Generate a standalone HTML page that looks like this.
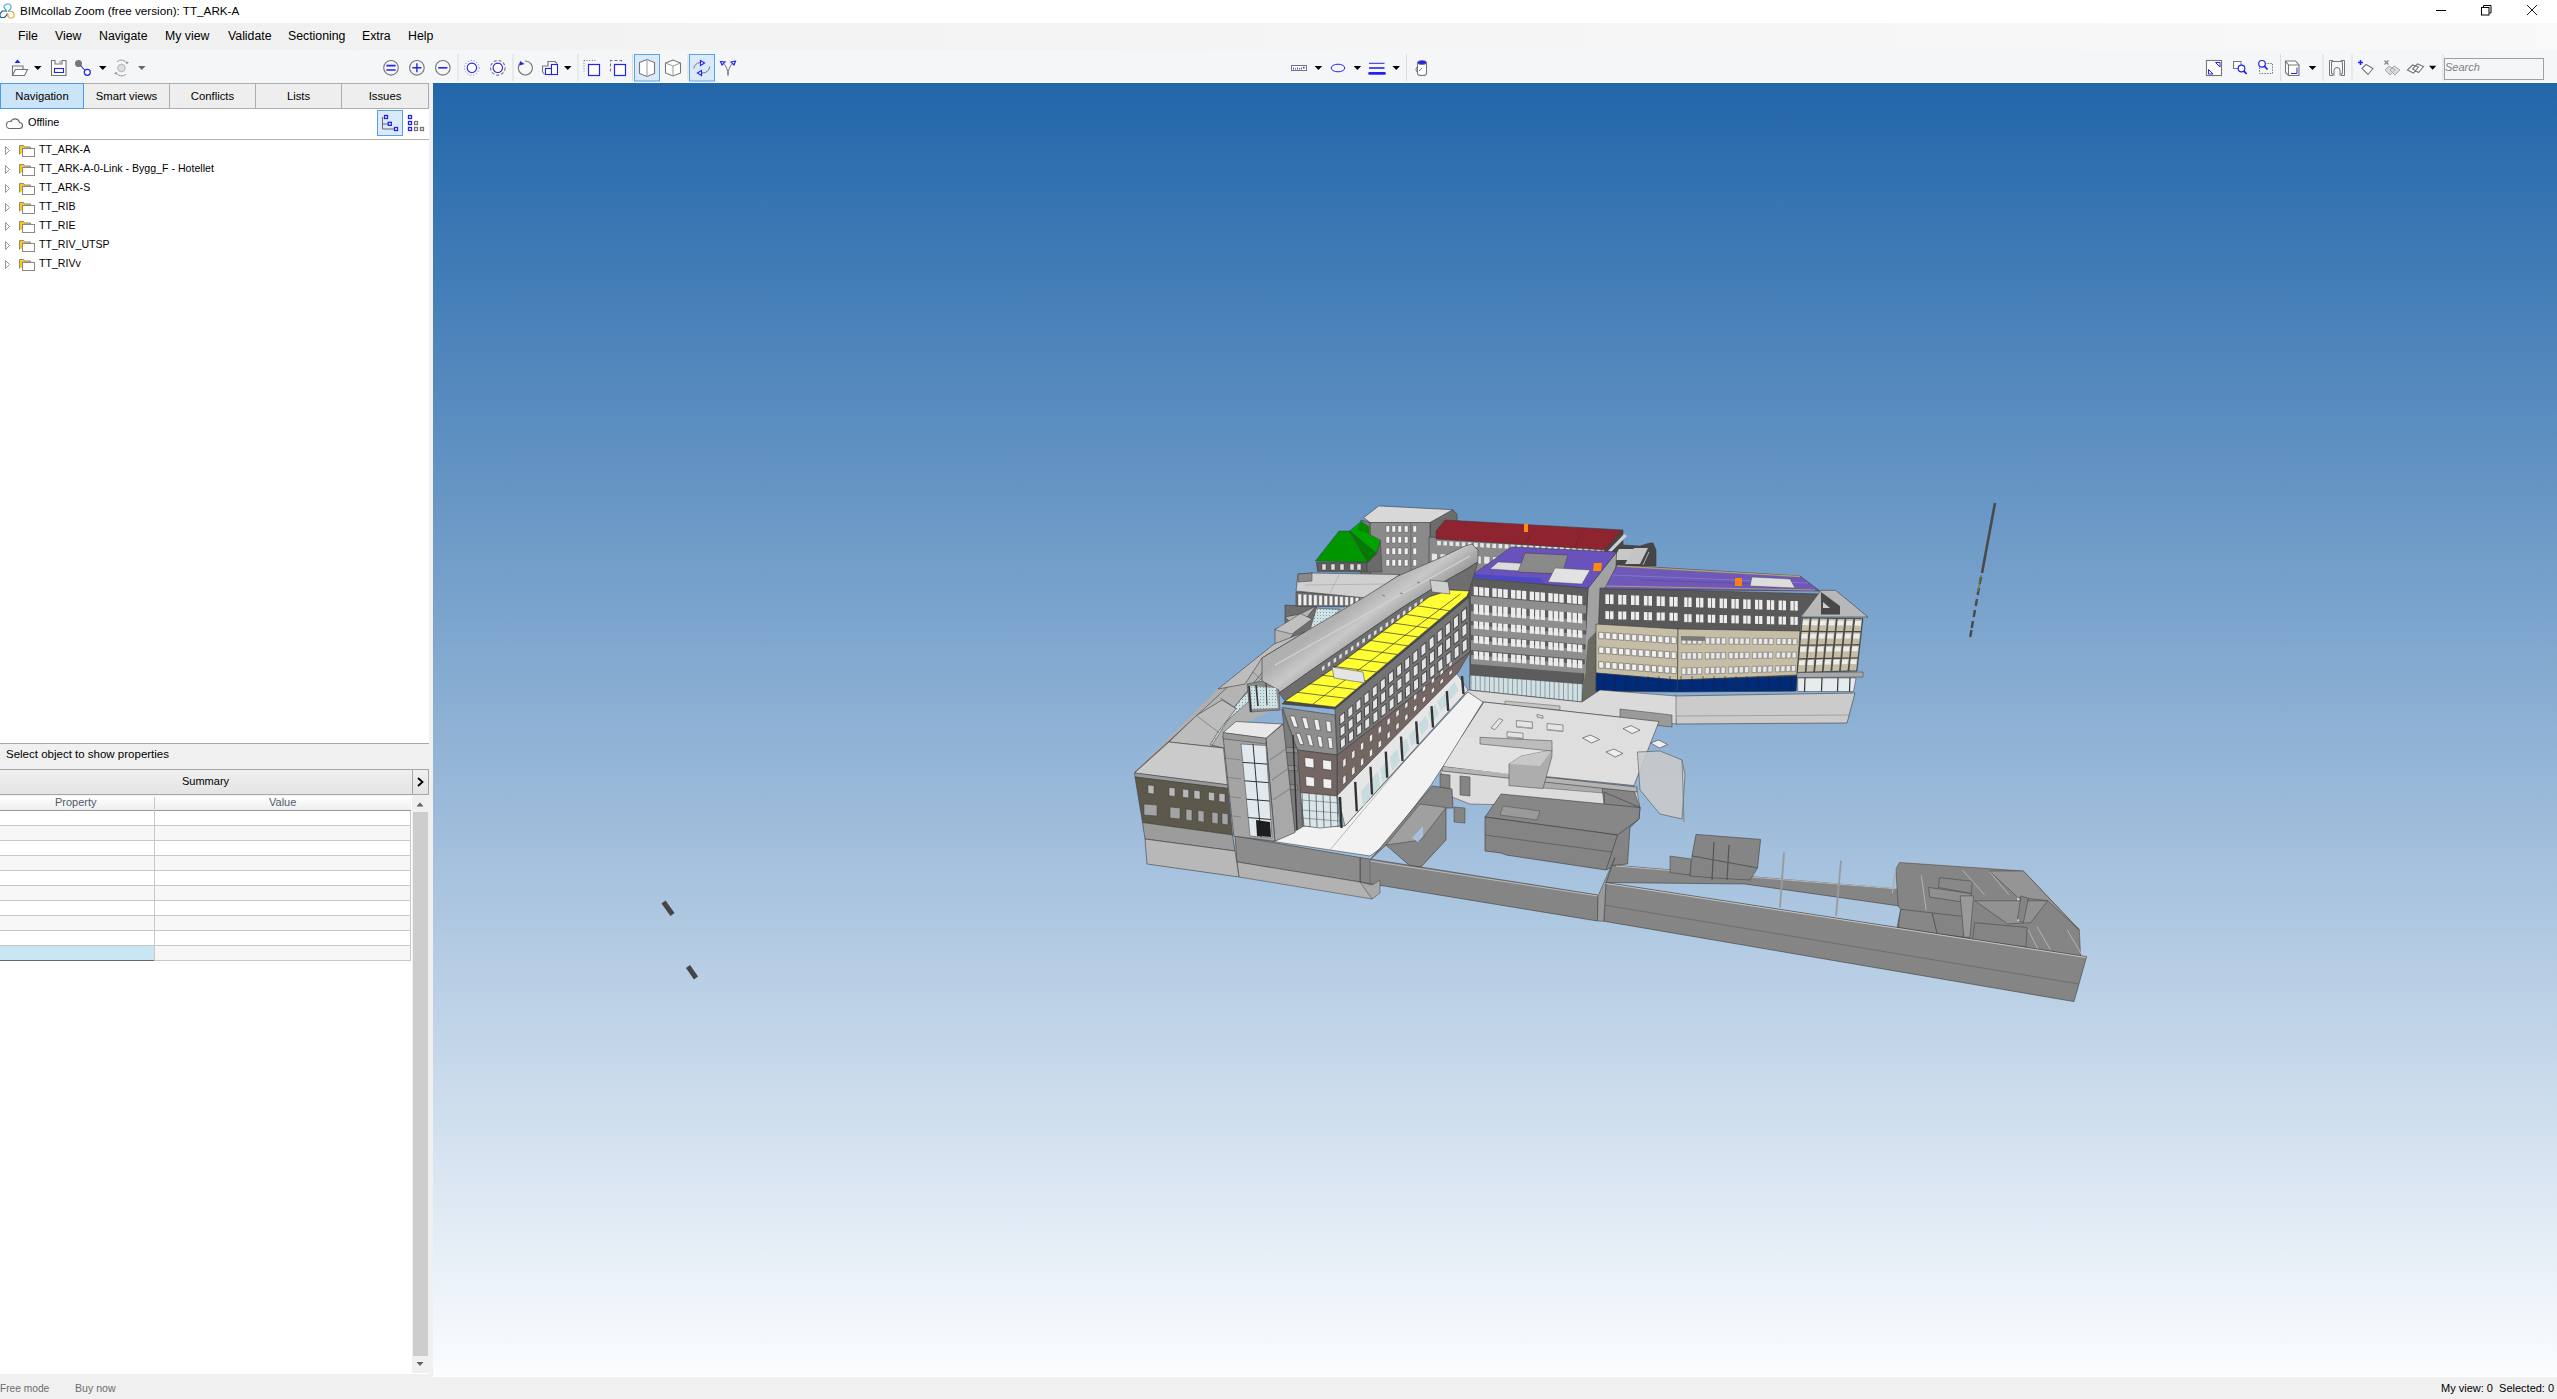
<!DOCTYPE html>
<html><head><meta charset="utf-8">
<style>
*{margin:0;padding:0;box-sizing:border-box}
html,body{width:2557px;height:1399px;overflow:hidden;background:#fff;font-family:"Liberation Sans",sans-serif;color:#000}
.a{position:absolute}
#title{left:0;top:0;width:2557px;height:23px;background:#fff}
#title .t{left:20px;top:4px;font-size:11.7px;white-space:nowrap;color:#000}
#menu{left:0;top:23px;width:2557px;height:27px;background:linear-gradient(90deg,#f0f0f0 0%,#f9f9f9 100%)}
#menu span{position:absolute;top:6px;font-size:12.3px;white-space:nowrap}
#tb{left:0;top:50px;width:2557px;height:33px;background:#f5f6f8}
#left{left:0;top:83px;width:429px;height:1291px;background:#fff}
#split{left:429px;top:83px;width:4px;height:1294px;background:#f0f0f0}
#vp{left:433px;top:83px;width:2124px;height:1294px;background:linear-gradient(180deg,#2266aa 0%,#fbfdff 100%)}
#status{left:0;top:1377px;width:2557px;height:22px;background:#f0f0f0}
#lstrip{left:0;top:1374px;width:433px;height:3px;background:#f0f0f0}
#status span{position:absolute;top:5px;font-size:11px;white-space:nowrap}
.tab{position:absolute;top:0;height:26px;border:1px solid #adadad;border-left:none;background:#eeeeee;font-size:11.3px;text-align:center;line-height:24px;color:#000}
.tree{position:absolute;left:0;width:429px;height:19px;font-size:10.6px}
.tree span{position:absolute;left:39px;top:3px;white-space:nowrap}
.tree svg{position:absolute;left:0;top:0}
.sep{position:absolute;top:54px;width:1px;height:27px;background:#d9d9d9}
.row{position:absolute;left:0;width:411px;height:15px;border-bottom:1px solid #c8c8c8}
</style></head><body>
<div id="title" class="a">
<svg class="a" style="left:0;top:0" width="20" height="23" viewBox="0 0 20 23"><path d="M4.5 5.5l2-1.5h3l1.5 2v2l-1 1.5-2 2M6.5 10.5l-1.5-1.5-1-2v-1.5" fill="none" stroke="#3cb0e8" stroke-width="1.2"/><path d="M7 11.5l-1-.5h-3.5l-2.5 2.5v2.5l1 1.5h3.5l2-2 1-2" fill="none" stroke="#175a8e" stroke-width="1.2"/><path d="M8 11.5h4.5l1.5 2v3l-1.5 1.5h-3l-1.5-1.5v-3" fill="none" stroke="#e8aa3a" stroke-width="1.2"/></svg>
<div class="a t">BIMcollab Zoom (free version): TT_ARK-A</div>
<svg class="a" style="left:2430px;top:0" width="127" height="23" viewBox="2430 0 127 23">
<path d="M2436 10.5H2446" stroke="#000" stroke-width="1"/>
<path d="M2483.5 7V5.5h7.5v7.5h-1.5" fill="none" stroke="#000" stroke-width="1"/>
<rect x="2481.5" y="7.5" width="7.5" height="7.5" fill="none" stroke="#000" stroke-width="1"/>
<path d="M2527 5L2537 15M2537 5L2527 15" stroke="#000" stroke-width="0.9"/>
</svg>
</div>
<div id="menu" class="a"><span style="left:18px">File</span><span style="left:55px">View</span><span style="left:99px">Navigate</span><span style="left:165px">My view</span><span style="left:228px">Validate</span><span style="left:288px">Sectioning</span><span style="left:362px">Extra</span><span style="left:408px">Help</span></div>
<div id="tb" class="a"></div><svg class="a" style="left:0;top:50px" width="2557" height="33" viewBox="0 50 2557 33"><path d="M17.5 59.5l-3 3.5h6z" fill="#2323f0"/><path d="M12.5 75.5V66h10.5v3.5" fill="none" stroke="#767676" stroke-width="1.1"/><path d="M12.5 75.5l3-6h12l-3 6z" fill="#fff" stroke="#767676" stroke-width="1.1"/><path d="M34 66h7.5l-3.75 4z" fill="#000"/><path d="M51.5 60.5h3.5v3.5h7v-3.5h4v15h-14.5z" fill="#fff" stroke="#767676" stroke-width="1.1"/><rect x="54.5" y="68.5" width="9" height="4" fill="none" stroke="#2323f0" stroke-width="1.1"/><circle cx="60" cy="62" r="0.8" fill="#767676"/><circle cx="78.5" cy="63.5" r="3.5" fill="#767676"/><path d="M80.5 65.5l5 5.5" stroke="#2323f0" stroke-width="1.1"/><circle cx="87.3" cy="72.3" r="3" fill="#fff" stroke="#2323f0" stroke-width="1.2"/><path d="M99 66h7.5l-3.75 4z" fill="#000"/><circle cx="121.5" cy="68" r="3.8" fill="#ddd" stroke="#aaa" stroke-width="0.8"/><path d="M117 62a6 6 0 0 1 10 2M126 74a6 6 0 0 1-10-2" fill="none" stroke="#999" stroke-width="1"/><path d="M127 64l2-2-3.5-.5z M116 72l-2 2 3.5.5z" fill="#999"/><path d="M138 66h7.5l-3.75 4z" fill="#666"/><circle cx="391" cy="67.8" r="7.3" fill="none" stroke="#767676" stroke-width="1.1"/><path d="M386.4 65.6h9.2M386.4 70h9.2" stroke="#2323f0" stroke-width="1.6"/><circle cx="416.9" cy="67.8" r="7.3" fill="none" stroke="#767676" stroke-width="1.1"/><path d="M412.4 67.8h9M416.9 63.3v9" stroke="#2323f0" stroke-width="1.4"/><circle cx="442.8" cy="67.8" r="7.3" fill="none" stroke="#767676" stroke-width="1.1"/><path d="M438.2 67.8h9.2" stroke="#2323f0" stroke-width="1.6"/><rect x="457.5" y="54" width="1" height="27" fill="#dcdcdc"/><rect x="512.5" y="54" width="1" height="27" fill="#dcdcdc"/><rect x="577.5" y="54" width="1" height="27" fill="#dcdcdc"/><rect x="632" y="54" width="1" height="27" fill="#dcdcdc"/><rect x="687.5" y="54" width="1" height="27" fill="#dcdcdc"/><rect x="1406" y="54" width="1" height="27" fill="#dcdcdc"/><rect x="2280" y="54" width="1" height="27" fill="#dcdcdc"/><rect x="2322.5" y="54" width="1" height="27" fill="#dcdcdc"/><rect x="2351.5" y="54" width="1" height="27" fill="#dcdcdc"/><rect x="2442.5" y="54" width="1" height="27" fill="#dcdcdc"/><circle cx="471.9" cy="67.8" r="7.3" fill="none" stroke="#767676" stroke-width="1" stroke-dasharray="1 2"/><circle cx="471.9" cy="67.8" r="4.7" fill="#fff" stroke="#2323f0" stroke-width="1.1"/><circle cx="497.8" cy="67.8" r="7.3" fill="none" stroke="#767676" stroke-width="1.1" stroke-dasharray="3 2"/><circle cx="497.8" cy="67.8" r="4.7" fill="#fff" stroke="#2323f0" stroke-width="1.1"/><path d="M521 62.5a7 7 0 1 0 4-1.5" fill="none" stroke="#767676" stroke-width="1.1"/><path d="M520 61l-.5 4.5 5-1.5z" fill="#2323f0"/><path d="M542.5 72V66h5.5v-4.5h7l2 2" fill="none" stroke="#767676" stroke-width="1.1"/><path d="M542.5 72l2 2.5" stroke="#767676" stroke-width="1.1"/><rect x="545.5" y="68.5" width="6" height="6" fill="#fff" stroke="#2323f0" stroke-width="1.1"/><rect x="551.5" y="64.5" width="6" height="10" fill="#fff" stroke="#2323f0" stroke-width="1.1"/><path d="M564 66h7.5l-3.75 4z" fill="#000"/><path d="M584 60.5h12M584 60.5v11" stroke="#767676" stroke-width="1" stroke-dasharray="1 1.6"/><rect x="588.5" y="64.5" width="11" height="11" fill="#fff" stroke="#2323f0" stroke-width="1.2"/><path d="M610.5 71.5v-11h11v3" fill="none" stroke="#767676" stroke-width="1.1" stroke-dasharray="3 2"/><rect x="614.5" y="64.5" width="11" height="11" fill="#fff" stroke="#2323f0" stroke-width="1.2"/><rect x="634.5" y="54.5" width="25" height="26.5" fill="#dbeafb" stroke="#5aa1eb" stroke-width="1"/><rect x="689.5" y="54.5" width="25" height="26.5" fill="#dbeafb" stroke="#5aa1eb" stroke-width="1"/><path d="M639.5 62.5l7.5-3 7.5 3v11l-7.5 3-7.5-3z" fill="#fff" stroke="#767676" stroke-width="1.1"/><path d="M647 59.5v17" stroke="#aaa" stroke-width="1.2"/><path d="M665.5 63l7.5-3 7.5 3v10l-7.5 3-7.5-3z" fill="#fff" stroke="#767676" stroke-width="1.1"/><path d="M665.5 63l7.5 3 7.5-3M673 66v10" fill="none" stroke="#999" stroke-width="1"/><path d="M694 68.5a7 6 0 0 1 6-6M709.5 66.5a7 6 0 0 1-7.5 6.5" fill="none" stroke="#767676" stroke-width="1"/><path d="M700.5 60.5v5l4-2.5z M701.5 70.5v5l-4-2.5z" fill="#fff" stroke="#2323f0" stroke-width="1.2"/><path d="M728 75.5q0-8-5-12.5M728 75.5q0-8 5-12.5" fill="none" stroke="#767676" stroke-width="1"/><path d="M720.5 61.5l4.5.5-3 3z M735.5 61l-4.5 1 3 3z" fill="#fff" stroke="#2323f0" stroke-width="1.2"/><rect x="1291.5" y="65.5" width="15" height="5" fill="#fff" stroke="#767676" stroke-width="1"/><path d="M1293.5 67.5v2M1295.5 68v1.5M1297.5 67.5v2M1299.5 68v1.5M1301.5 67.5v2" stroke="#2323f0" stroke-width="0.8"/><rect x="1303" y="66.8" width="1.6" height="1.6" fill="#2323f0"/><path d="M1314.7 66h7.5l-3.75 4z" fill="#000"/><ellipse cx="1338" cy="68" rx="6.8" ry="3.8" fill="none" stroke="#2323f0" stroke-width="1"/><path d="M1353.7 66h7.5l-3.75 4z" fill="#000"/><path d="M1369 63.3h15.5" stroke="#2323f0" stroke-width="1"/><path d="M1369 68h15.5" stroke="#2323f0" stroke-width="1.6"/><path d="M1369.5 73.4h15" stroke="#2323f0" stroke-width="2.6" stroke-linecap="round"/><path d="M1392.5 66h7.5l-3.75 4z" fill="#000"/><path d="M1417.5 62.5v11a4.5 2 0 0 0 9 0v-11" fill="#fff" stroke="#767676" stroke-width="1.1"/><ellipse cx="1422" cy="62.5" rx="4.5" ry="2" fill="#2323f0" stroke="#767676" stroke-width="0.8"/><path d="M1417.5 66.5a3 3.5 0 0 0 0 6" fill="none" stroke="#767676" stroke-width="1"/><path d="M1419 71l3-3" stroke="#767676" stroke-width="1"/><rect x="2206.5" y="60.5" width="15" height="15" fill="#fff" stroke="#767676" stroke-width="1.1"/><path d="M2215.5 62.5h4.5v4.5z M2208.5 69.5l4.5 4.5h-4.5z" fill="#fff" stroke="#2323f0" stroke-width="1"/><rect x="2233.5" y="61.5" width="7.5" height="7" fill="#fff" stroke="#767676" stroke-width="1"/><circle cx="2241.5" cy="68.5" r="3.3" fill="#fff" stroke="#2323f0" stroke-width="1.2"/><path d="M2243.8 70.8l2.8 3.2" stroke="#2323f0" stroke-width="1.8"/><rect x="2259.5" y="63.5" width="13" height="10" fill="none" stroke="#767676" stroke-width="1" stroke-dasharray="1.5 1.2"/><circle cx="2262" cy="63.8" r="3.3" fill="#fff" stroke="#2323f0" stroke-width="1.2"/><path d="M2264.3 66l3.2 3.5" stroke="#2323f0" stroke-width="1.8"/><path d="M2285.5 61h10l3.5 4v10.5h-10.5l-3-3z" fill="#fff" stroke="#767676" stroke-width="1.1"/><path d="M2288.5 65h10.5M2285.5 61l3 4v10.5" fill="none" stroke="#767676" stroke-width="1.1"/><path d="M2291 73.5h6v-6" fill="none" stroke="#2323f0" stroke-width="1"/><path d="M2308.75 66h7.5l-3.75 4z" fill="#000"/><path d="M2329.5 60.5h3.5v1.2h-1.5v12h1.5v1.8h-3.5z M2344.5 60.5h-3.5v1.2h1.5v12h-1.5v1.8h3.5z" fill="#fff" stroke="#767676" stroke-width="1"/><path d="M2333 61.5h8M2334 75.5v-5a3 3 0 0 1 6 0v5" fill="none" stroke="#767676" stroke-width="1"/><path d="M2358 62.5h5M2360.5 60v5" stroke="#2323f0" stroke-width="1.5"/><path d="M2362 68.5l4-4 7 4-5 6z" fill="#fff" stroke="#767676" stroke-width="1.1"/><path d="M2384.5 60.5l4 4M2388.5 60.5l-4 4" stroke="#888" stroke-width="1.4"/><path d="M2385 70l4-4 6 4-5 5z M2390 70l4-4 6 4-5 5z" fill="#dadada" stroke="#aaa" stroke-width="1"/><path d="M2407.5 70l5-5 6 2-5 6z M2412.5 69l5-5 6 2.5-5 6z" fill="#fff" stroke="#767676" stroke-width="1.1"/><path d="M2429 65.8h7.3l-3.65 4z" fill="#000"/><rect x="2444.5" y="58.5" width="99" height="21" fill="#f5f6f8" stroke="#a0a0a0" stroke-width="1"/></svg><div class="a" style="left:2445px;top:61px;font-size:11px;font-style:italic;color:#808080">Search</div><div id="left" class="a">
<div class="a" style="left:0;top:0;width:429px;height:26px;background:#f5f6f8"></div>
<div class="tab" style="left:0px;width:84px;background:#cce4f7;border:1px solid #4d9ae8">Navigation</div>
<div class="tab" style="left:84px;width:86px">Smart views</div>
<div class="tab" style="left:170px;width:86px">Conflicts</div>
<div class="tab" style="left:256px;width:86px">Lists</div>
<div class="tab" style="left:342px;width:87px">Issues</div>
</div>
<svg class="a" style="left:0;top:108px" width="429" height="32" viewBox="0 108 429 32"><path d="M9 128.5h10.5a3 3 0 0 0 0-6 4.5 4.5 0 0 0-8.5-1 3.2 3.2 0 0 0-2 7z" fill="none" stroke="#666" stroke-width="1.1"/><rect x="377.5" y="110.5" width="25" height="25" fill="#daeafb" stroke="#59a0eb" stroke-width="1"/><path d="M382.5 117v12h11.5M382.5 124h5.5" fill="none" stroke="#666" stroke-width="1"/><rect x="384.5" y="115.5" width="3" height="3" fill="#fff" stroke="#2323f0" stroke-width="1.3"/><rect x="388.3" y="122.3" width="3" height="3" fill="#fff" stroke="#2323f0" stroke-width="1.3"/><rect x="394.5" y="127.5" width="3" height="3" fill="#fff" stroke="#2323f0" stroke-width="1.3"/><rect x="408.5" y="115.5" width="3" height="3" fill="#fff" stroke="#2323f0" stroke-width="1.3"/><rect x="408.5" y="121.5" width="3" height="3" fill="#fff" stroke="#2323f0" stroke-width="1.3"/><rect x="408.5" y="127.5" width="3" height="3" fill="#fff" stroke="#2323f0" stroke-width="1.3"/><rect x="414.5" y="121.5" width="3" height="3" fill="#fff" stroke="#777" stroke-width="1.3"/><rect x="414.5" y="127.5" width="3" height="3" fill="#fff" stroke="#777" stroke-width="1.3"/><rect x="420.5" y="127.5" width="3" height="3" fill="#fff" stroke="#777" stroke-width="1.3"/><rect x="0" y="139" width="429" height="1" fill="#b4b4b4"/></svg>
<div class="a" style="left:28px;top:116px;font-size:10.9px">Offline</div>
<div class="tree" style="top:140px"><svg width="40" height="19"><path d="M5.5 6.5v8l4-4z" fill="#fff" stroke="#999" stroke-width="1"/><path d="M19.5 14.5v-9h4l1 1.5h6v2" fill="#ffc90e" stroke="#888" stroke-width="1"/><rect x="22.5" y="8.5" width="12" height="8" fill="#fff" stroke="#888" stroke-width="1"/></svg><span>TT_ARK-A</span></div>
<div class="tree" style="top:159px"><svg width="40" height="19"><path d="M5.5 6.5v8l4-4z" fill="#fff" stroke="#999" stroke-width="1"/><path d="M19.5 14.5v-9h4l1 1.5h6v2" fill="#ffc90e" stroke="#888" stroke-width="1"/><rect x="22.5" y="8.5" width="12" height="8" fill="#fff" stroke="#888" stroke-width="1"/></svg><span>TT_ARK-A-0-Link - Bygg_F - Hotellet</span></div>
<div class="tree" style="top:178px"><svg width="40" height="19"><path d="M5.5 6.5v8l4-4z" fill="#fff" stroke="#999" stroke-width="1"/><path d="M19.5 14.5v-9h4l1 1.5h6v2" fill="#ffc90e" stroke="#888" stroke-width="1"/><rect x="22.5" y="8.5" width="12" height="8" fill="#fff" stroke="#888" stroke-width="1"/></svg><span>TT_ARK-S</span></div>
<div class="tree" style="top:197px"><svg width="40" height="19"><path d="M5.5 6.5v8l4-4z" fill="#fff" stroke="#999" stroke-width="1"/><path d="M19.5 14.5v-9h4l1 1.5h6v2" fill="#ffc90e" stroke="#888" stroke-width="1"/><rect x="22.5" y="8.5" width="12" height="8" fill="#fff" stroke="#888" stroke-width="1"/></svg><span>TT_RIB</span></div>
<div class="tree" style="top:216px"><svg width="40" height="19"><path d="M5.5 6.5v8l4-4z" fill="#fff" stroke="#999" stroke-width="1"/><path d="M19.5 14.5v-9h4l1 1.5h6v2" fill="#ffc90e" stroke="#888" stroke-width="1"/><rect x="22.5" y="8.5" width="12" height="8" fill="#fff" stroke="#888" stroke-width="1"/></svg><span>TT_RIE</span></div>
<div class="tree" style="top:235px"><svg width="40" height="19"><path d="M5.5 6.5v8l4-4z" fill="#fff" stroke="#999" stroke-width="1"/><path d="M19.5 14.5v-9h4l1 1.5h6v2" fill="#ffc90e" stroke="#888" stroke-width="1"/><rect x="22.5" y="8.5" width="12" height="8" fill="#fff" stroke="#888" stroke-width="1"/></svg><span>TT_RIV_UTSP</span></div>
<div class="tree" style="top:254px"><svg width="40" height="19"><path d="M5.5 6.5v8l4-4z" fill="#fff" stroke="#999" stroke-width="1"/><path d="M19.5 14.5v-9h4l1 1.5h6v2" fill="#ffc90e" stroke="#888" stroke-width="1"/><rect x="22.5" y="8.5" width="12" height="8" fill="#fff" stroke="#888" stroke-width="1"/></svg><span>TT_RIVv</span></div>
<div class="a" style="left:0;top:743px;width:429px;height:1px;background:#a8a8a8"></div>
<div class="a" style="left:0;top:744px;width:429px;height:52px;background:#f0f0f0"></div>
<div class="a" style="left:6px;top:748px;font-size:11.5px">Select object to show properties</div>
<div class="a" style="left:0;top:769px;width:429px;height:26px;border:1px solid #a8a8a8;border-left:none;background:linear-gradient(#f0f0f0,#e4e4e4)"></div>
<div class="a" style="left:412px;top:769px;width:1px;height:26px;background:#a8a8a8"></div>
<div class="a" style="left:182px;top:775px;font-size:11px">Summary</div>
<svg class="a" style="left:416px;top:776px" width="10" height="12"><path d="M2 2l4.5 4L2 10" fill="none" stroke="#000" stroke-width="1.8"/></svg>
<div class="a" style="left:0;top:796px;width:411px;height:15px;background:linear-gradient(#ffffff,#eeeeee);border-bottom:1px solid #999"></div>
<div class="a" style="left:154px;top:797px;width:1px;height:14px;background:#c8c8c8"></div>
<div class="a" style="left:55px;top:796px;font-size:11px;color:#4f5a6e">Property</div>
<div class="a" style="left:269px;top:796px;font-size:11px;color:#4f5a6e">Value</div>
<div class="a" style="left:0;top:811px;width:411px;height:15px;background:#ffffff;border-bottom:1px solid #c8c8c8"></div>
<div class="a" style="left:0;top:826px;width:411px;height:15px;background:#f7f7f7;border-bottom:1px solid #c8c8c8"></div>
<div class="a" style="left:0;top:841px;width:411px;height:15px;background:#ffffff;border-bottom:1px solid #c8c8c8"></div>
<div class="a" style="left:0;top:856px;width:411px;height:15px;background:#f7f7f7;border-bottom:1px solid #c8c8c8"></div>
<div class="a" style="left:0;top:871px;width:411px;height:15px;background:#ffffff;border-bottom:1px solid #c8c8c8"></div>
<div class="a" style="left:0;top:886px;width:411px;height:15px;background:#f7f7f7;border-bottom:1px solid #c8c8c8"></div>
<div class="a" style="left:0;top:901px;width:411px;height:15px;background:#ffffff;border-bottom:1px solid #c8c8c8"></div>
<div class="a" style="left:0;top:916px;width:411px;height:15px;background:#f7f7f7;border-bottom:1px solid #c8c8c8"></div>
<div class="a" style="left:0;top:931px;width:411px;height:15px;background:#ffffff;border-bottom:1px solid #c8c8c8"></div>
<div class="a" style="left:0;top:946px;width:411px;height:15px;background:#f7f7f7;border-bottom:1px solid #c8c8c8"></div>
<div class="a" style="left:0;top:946px;width:155px;height:15px;background:#c9e6f5;border-bottom:1px solid #666;border-right:1px solid #888"></div>
<div class="a" style="left:154px;top:811px;width:1px;height:150px;background:#c8c8c8"></div>
<div class="a" style="left:410px;top:811px;width:1px;height:150px;background:#c8c8c8"></div>
<div class="a" style="left:412px;top:796px;width:17px;height:577px;background:#f0f0f0"></div>
<div class="a" style="left:413px;top:812px;width:15px;height:544px;background:#cdcdcd"></div>
<svg class="a" style="left:412px;top:796px" width="17" height="578"><path d="M4.5 10.5h7l-3.5-4z" fill="#606060"/><path d="M4.5 566h7l-3.5 4z" fill="#606060"/></svg><div id="split" class="a"></div><div id="lstrip" class="a"></div><div id="vp" class="a"></div><svg class="a" style="left:0;top:0" width="2557" height="1399" viewBox="0 0 2557 1399">
<defs><linearGradient id="vault" gradientUnits="userSpaceOnUse" x1="1368" y1="594" x2="1392" y2="626"><stop offset="0" stop-color="#b0b0b0"/><stop offset="0.45" stop-color="#c8c8c8"/><stop offset="1" stop-color="#9a9a9a"/></linearGradient><pattern id="glass" width="3" height="3" patternUnits="userSpaceOnUse"><rect width="3" height="3" fill="#cfe2e4"/><rect width="1" height="1" fill="#8aa0a4"/></pattern></defs>
<line x1="663.5" y1="902.0" x2="672.5" y2="914.5" stroke="#454545" stroke-width="5"/>
<line x1="688.0" y1="966.5" x2="696.0" y2="978.0" stroke="#454545" stroke-width="5"/>
<line x1="1995.0" y1="503.0" x2="1982.0" y2="573.0" stroke="#4a4a4a" stroke-width="2.6"/>
<line x1="1981.0" y1="577.0" x2="1979.7" y2="584.0" stroke="#4a4a4a" stroke-width="2.4"/>
<line x1="1979.0" y1="588.0" x2="1977.7" y2="595.0" stroke="#4a4a4a" stroke-width="2.4"/>
<line x1="1977.0" y1="599.0" x2="1975.7" y2="606.0" stroke="#4a4a4a" stroke-width="2.4"/>
<line x1="1975.0" y1="610.0" x2="1973.7" y2="617.0" stroke="#4a4a4a" stroke-width="2.4"/>
<line x1="1973.0" y1="621.0" x2="1971.7" y2="628.0" stroke="#4a4a4a" stroke-width="2.4"/>
<line x1="1971.5" y1="630.0" x2="1970.2" y2="637.0" stroke="#4a4a4a" stroke-width="2.4"/>
<line x1="1981.0" y1="575.0" x2="1978.0" y2="592.0" stroke="#6a7a30" stroke-width="1.2"/>
<polygon points="1430.0,522.5 1452.7,509.7 1457.0,514.0 1457.0,560.0 1430.0,575.0" fill="#6c6c6c" stroke="#3c3c3c" stroke-width="0.6" stroke-linejoin="round"/>
<polygon points="1370.0,522.5 1430.0,522.5 1430.0,576.0 1370.0,576.0" fill="#8a8a8a" stroke="#3c3c3c" stroke-width="0.6" stroke-linejoin="round"/>
<polygon points="1386.0,525.7 1389.6,525.7 1389.6,532.2 1386.0,532.2" fill="#f2f2f2" stroke="#444" stroke-width="0.4" stroke-linejoin="round"/>
<polygon points="1392.0,525.7 1395.6,525.7 1395.6,532.2 1392.0,532.2" fill="#f2f2f2" stroke="#444" stroke-width="0.4" stroke-linejoin="round"/>
<polygon points="1398.0,525.7 1401.6,525.7 1401.6,532.2 1398.0,532.2" fill="#f2f2f2" stroke="#444" stroke-width="0.4" stroke-linejoin="round"/>
<polygon points="1404.4,525.7 1408.0,525.7 1408.0,532.2 1404.4,532.2" fill="#f2f2f2" stroke="#444" stroke-width="0.4" stroke-linejoin="round"/>
<polygon points="1413.0,525.7 1416.6,525.7 1416.6,532.2 1413.0,532.2" fill="#f2f2f2" stroke="#444" stroke-width="0.4" stroke-linejoin="round"/>
<polygon points="1386.0,536.5 1389.6,536.5 1389.6,543.0 1386.0,543.0" fill="#f2f2f2" stroke="#444" stroke-width="0.4" stroke-linejoin="round"/>
<polygon points="1392.0,536.5 1395.6,536.5 1395.6,543.0 1392.0,543.0" fill="#f2f2f2" stroke="#444" stroke-width="0.4" stroke-linejoin="round"/>
<polygon points="1398.0,536.5 1401.6,536.5 1401.6,543.0 1398.0,543.0" fill="#f2f2f2" stroke="#444" stroke-width="0.4" stroke-linejoin="round"/>
<polygon points="1404.4,536.5 1408.0,536.5 1408.0,543.0 1404.4,543.0" fill="#f2f2f2" stroke="#444" stroke-width="0.4" stroke-linejoin="round"/>
<polygon points="1413.0,536.5 1416.6,536.5 1416.6,543.0 1413.0,543.0" fill="#f2f2f2" stroke="#444" stroke-width="0.4" stroke-linejoin="round"/>
<polygon points="1386.0,548.0 1389.6,548.0 1389.6,554.5 1386.0,554.5" fill="#f2f2f2" stroke="#444" stroke-width="0.4" stroke-linejoin="round"/>
<polygon points="1392.0,548.0 1395.6,548.0 1395.6,554.5 1392.0,554.5" fill="#f2f2f2" stroke="#444" stroke-width="0.4" stroke-linejoin="round"/>
<polygon points="1398.0,548.0 1401.6,548.0 1401.6,554.5 1398.0,554.5" fill="#f2f2f2" stroke="#444" stroke-width="0.4" stroke-linejoin="round"/>
<polygon points="1404.4,548.0 1408.0,548.0 1408.0,554.5 1404.4,554.5" fill="#f2f2f2" stroke="#444" stroke-width="0.4" stroke-linejoin="round"/>
<polygon points="1413.0,548.0 1416.6,548.0 1416.6,554.5 1413.0,554.5" fill="#f2f2f2" stroke="#444" stroke-width="0.4" stroke-linejoin="round"/>
<polygon points="1386.0,559.5 1389.6,559.5 1389.6,566.0 1386.0,566.0" fill="#f2f2f2" stroke="#444" stroke-width="0.4" stroke-linejoin="round"/>
<polygon points="1392.0,559.5 1395.6,559.5 1395.6,566.0 1392.0,566.0" fill="#f2f2f2" stroke="#444" stroke-width="0.4" stroke-linejoin="round"/>
<polygon points="1398.0,559.5 1401.6,559.5 1401.6,566.0 1398.0,566.0" fill="#f2f2f2" stroke="#444" stroke-width="0.4" stroke-linejoin="round"/>
<polygon points="1404.4,559.5 1408.0,559.5 1408.0,566.0 1404.4,566.0" fill="#f2f2f2" stroke="#444" stroke-width="0.4" stroke-linejoin="round"/>
<polygon points="1413.0,559.5 1416.6,559.5 1416.6,566.0 1413.0,566.0" fill="#f2f2f2" stroke="#444" stroke-width="0.4" stroke-linejoin="round"/>
<line x1="1410.8" y1="522.5" x2="1410.8" y2="576.0" stroke="#555" stroke-width="0.6"/>
<polygon points="1363.7,517.7 1378.7,505.9 1452.7,509.7 1430.0,522.5 1370.0,522.5" fill="#d8d8d8" stroke="#3c3c3c" stroke-width="0.6" stroke-linejoin="round"/>
<polygon points="1361.0,520.0 1370.0,522.5 1370.0,576.0 1361.0,576.0" fill="#7a7a7a" stroke="#3c3c3c" stroke-width="0.6" stroke-linejoin="round"/>
<polygon points="1429.0,537.0 1622.0,547.0 1625.0,575.0 1429.0,575.0" fill="#8a8a8a" stroke="#3c3c3c" stroke-width="0.6" stroke-linejoin="round"/>
<polygon points="1437.2,541.0 1440.9,541.1 1440.9,545.3 1437.2,545.2" fill="#e6e6e6"/><polygon points="1443.4,541.3 1447.0,541.4 1447.0,545.6 1443.4,545.5" fill="#e6e6e6"/><polygon points="1449.5,541.6 1453.2,541.7 1453.2,545.9 1449.5,545.8" fill="#e6e6e6"/><polygon points="1455.6,541.9 1459.3,542.0 1459.3,546.2 1455.6,546.1" fill="#e6e6e6"/><polygon points="1461.8,542.2 1465.4,542.3 1465.4,546.5 1461.8,546.4" fill="#e6e6e6"/><polygon points="1467.9,542.5 1471.6,542.6 1471.6,546.8 1467.9,546.7" fill="#e6e6e6"/><polygon points="1474.0,542.8 1477.7,542.9 1477.7,547.1 1474.0,547.0" fill="#e6e6e6"/><polygon points="1480.2,543.1 1483.8,543.2 1483.8,547.4 1480.2,547.3" fill="#e6e6e6"/><polygon points="1486.3,543.4 1490.0,543.5 1490.0,547.7 1486.3,547.6" fill="#e6e6e6"/><polygon points="1492.4,543.7 1496.1,543.8 1496.1,548.0 1492.4,547.9" fill="#e6e6e6"/><polygon points="1498.6,544.0 1502.2,544.1 1502.2,548.3 1498.6,548.2" fill="#e6e6e6"/><polygon points="1504.7,544.3 1508.4,544.4 1508.4,548.6 1504.7,548.5" fill="#e6e6e6"/><polygon points="1510.8,544.6 1514.5,544.7 1514.5,548.9 1510.8,548.8" fill="#e6e6e6"/><polygon points="1517.0,544.9 1520.6,545.0 1520.6,549.2 1517.0,549.1" fill="#e6e6e6"/><polygon points="1523.1,545.2 1526.8,545.3 1526.8,549.5 1523.1,549.4" fill="#e6e6e6"/><polygon points="1529.2,545.5 1532.9,545.6 1532.9,549.8 1529.2,549.7" fill="#e6e6e6"/><polygon points="1535.4,545.8 1539.0,545.9 1539.0,550.1 1535.4,550.0" fill="#e6e6e6"/><polygon points="1541.5,546.1 1545.2,546.2 1545.2,550.4 1541.5,550.3" fill="#e6e6e6"/><polygon points="1547.6,546.4 1551.3,546.5 1551.3,550.7 1547.6,550.6" fill="#e6e6e6"/><polygon points="1553.8,546.7 1557.4,546.8 1557.4,551.0 1553.8,550.9" fill="#e6e6e6"/><polygon points="1559.9,547.0 1563.6,547.1 1563.6,551.3 1559.9,551.2" fill="#e6e6e6"/><polygon points="1566.0,547.3 1569.7,547.4 1569.7,551.6 1566.0,551.5" fill="#e6e6e6"/><polygon points="1572.2,547.6 1575.8,547.7 1575.8,551.9 1572.2,551.8" fill="#e6e6e6"/><polygon points="1578.3,547.9 1582.0,548.0 1582.0,552.2 1578.3,552.1" fill="#e6e6e6"/><polygon points="1584.4,548.2 1588.1,548.3 1588.1,552.5 1584.4,552.4" fill="#e6e6e6"/><polygon points="1590.6,548.5 1594.2,548.6 1594.2,552.8 1590.6,552.7" fill="#e6e6e6"/><polygon points="1596.7,548.8 1600.4,548.9 1600.4,553.1 1596.7,553.0" fill="#e6e6e6"/><polygon points="1602.8,549.1 1606.5,549.2 1606.5,553.4 1602.8,553.3" fill="#e6e6e6"/><polygon points="1609.0,549.4 1612.6,549.5 1612.6,553.7 1609.0,553.6" fill="#e6e6e6"/><polygon points="1615.1,549.7 1618.8,549.8 1618.8,554.0 1615.1,553.9" fill="#e6e6e6"/>
<polygon points="1431.8,553.6 1437.0,553.9 1437.0,560.9 1431.8,560.6" fill="#e6e6e6"/><polygon points="1440.5,554.1 1445.8,554.4 1445.8,561.4 1440.5,561.1" fill="#e6e6e6"/><polygon points="1449.2,554.6 1454.5,554.9 1454.5,561.9 1449.2,561.6" fill="#e6e6e6"/><polygon points="1458.0,555.1 1463.2,555.4 1463.2,562.4 1458.0,562.1" fill="#e6e6e6"/><polygon points="1466.8,555.6 1472.0,555.9 1472.0,562.9 1466.8,562.6" fill="#e6e6e6"/><polygon points="1475.5,556.1 1480.8,556.4 1480.8,563.4 1475.5,563.1" fill="#e6e6e6"/><polygon points="1484.2,556.6 1489.5,556.9 1489.5,563.9 1484.2,563.6" fill="#e6e6e6"/><polygon points="1493.0,557.1 1498.2,557.4 1498.2,564.4 1493.0,564.1" fill="#e6e6e6"/>
<polygon points="1436.0,531.0 1445.0,520.0 1623.0,530.0 1606.0,550.0 1530.0,545.0 1436.0,539.0" fill="#8e2430" stroke="#3c3c3c" stroke-width="0.6" stroke-linejoin="round"/>
<line x1="1530.0" y1="534.0" x2="1525.0" y2="545.0" stroke="#6a1a1e" stroke-width="0.5"/>
<line x1="1580.0" y1="536.0" x2="1575.0" y2="547.0" stroke="#6a1a1e" stroke-width="0.5"/>
<polygon points="1524.0,524.0 1528.0,524.0 1528.0,532.0 1524.0,532.0" fill="#ff8a10"/>
<polygon points="1623.0,530.0 1623.0,545.0 1640.0,546.0 1650.0,543.0 1653.0,543.0 1656.0,550.0 1656.0,566.0 1617.0,566.0 1604.0,551.0" fill="#454545" stroke="#3c3c3c" stroke-width="0.6" stroke-linejoin="round"/>
<polygon points="1619.0,549.0 1635.0,549.0 1629.0,560.0 1613.0,560.0" fill="#c8c8c8"/>
<polygon points="1634.0,548.0 1648.0,548.0 1640.0,564.0 1625.0,564.0" fill="#c4c4c4"/>
<polygon points="1608.0,551.0 1624.0,534.0 1627.0,536.0 1611.0,552.0" fill="#cfcfcf"/>
<line x1="1649.0" y1="552.0" x2="1643.0" y2="565.0" stroke="#cfcfcf" stroke-width="0.8"/>
<polygon points="1316.5,562.2 1367.0,562.0 1367.0,572.0 1317.5,571.3" fill="#5e5e5e" stroke="#3c3c3c" stroke-width="0.6" stroke-linejoin="round"/>
<polygon points="1322.0,564.0 1326.0,564.0 1326.0,570.0 1322.0,570.0" fill="#dcdcdc" stroke="#333" stroke-width="0.4" stroke-linejoin="round"/>
<polygon points="1331.0,564.0 1335.0,564.0 1335.0,570.0 1331.0,570.0" fill="#dcdcdc" stroke="#333" stroke-width="0.4" stroke-linejoin="round"/>
<polygon points="1340.0,564.0 1344.0,564.0 1344.0,570.0 1340.0,570.0" fill="#dcdcdc" stroke="#333" stroke-width="0.4" stroke-linejoin="round"/>
<polygon points="1350.0,564.0 1354.0,564.0 1354.0,570.0 1350.0,570.0" fill="#dcdcdc" stroke="#333" stroke-width="0.4" stroke-linejoin="round"/>
<polygon points="1357.0,564.0 1361.0,564.0 1361.0,570.0 1357.0,570.0" fill="#dcdcdc" stroke="#333" stroke-width="0.4" stroke-linejoin="round"/>
<polygon points="1367.0,562.0 1376.5,553.6 1380.3,540.2 1382.0,572.0 1367.0,572.0" fill="#6a6a6a" stroke="#3c3c3c" stroke-width="0.5" stroke-linejoin="round"/>
<polygon points="1349.7,531.0 1361.0,521.4 1369.0,527.0 1369.0,534.0 1380.3,540.2 1376.5,553.6" fill="#00a400" stroke="#3c3c3c" stroke-width="0.5" stroke-linejoin="round"/>
<polygon points="1315.4,561.0 1339.0,531.0 1349.7,531.0 1368.0,562.2" fill="#009600" stroke="#3c3c3c" stroke-width="0.5" stroke-linejoin="round"/>
<polygon points="1349.7,531.0 1376.5,553.6 1368.0,562.2" fill="#007d00" stroke="#3c3c3c" stroke-width="0.5" stroke-linejoin="round"/>
<polygon points="1361.0,521.4 1369.0,527.0 1369.0,534.0 1357.0,530.0" fill="#008a00"/>
<polygon points="1285.0,605.0 1316.5,607.0 1316.0,640.0 1285.0,640.0" fill="#6e6e6e" stroke="#3c3c3c" stroke-width="0.6" stroke-linejoin="round"/>
<polygon points="1296.0,592.0 1364.7,596.5 1364.7,607.0 1296.0,606.0" fill="#707070" stroke="#3c3c3c" stroke-width="0.6" stroke-linejoin="round"/>
<polygon points="1298.0,594.0 1301.6,594.0 1301.6,605.5 1298.0,605.5" fill="#f0f0f0" stroke="#444" stroke-width="0.4" stroke-linejoin="round"/>
<polygon points="1303.2,594.3 1306.8,594.3 1306.8,605.5 1303.2,605.5" fill="#f0f0f0" stroke="#444" stroke-width="0.4" stroke-linejoin="round"/>
<polygon points="1308.4,594.6 1312.0,594.6 1312.0,605.5 1308.4,605.5" fill="#f0f0f0" stroke="#444" stroke-width="0.4" stroke-linejoin="round"/>
<polygon points="1313.6,594.9 1317.2,594.9 1317.2,605.5 1313.6,605.5" fill="#f0f0f0" stroke="#444" stroke-width="0.4" stroke-linejoin="round"/>
<polygon points="1318.8,595.2 1322.4,595.2 1322.4,605.5 1318.8,605.5" fill="#f0f0f0" stroke="#444" stroke-width="0.4" stroke-linejoin="round"/>
<polygon points="1324.0,595.5 1327.6,595.5 1327.6,605.5 1324.0,605.5" fill="#f0f0f0" stroke="#444" stroke-width="0.4" stroke-linejoin="round"/>
<polygon points="1329.2,595.8 1332.8,595.8 1332.8,605.5 1329.2,605.5" fill="#f0f0f0" stroke="#444" stroke-width="0.4" stroke-linejoin="round"/>
<polygon points="1334.4,596.1 1338.0,596.1 1338.0,605.5 1334.4,605.5" fill="#f0f0f0" stroke="#444" stroke-width="0.4" stroke-linejoin="round"/>
<polygon points="1339.6,596.4 1343.2,596.4 1343.2,605.5 1339.6,605.5" fill="#f0f0f0" stroke="#444" stroke-width="0.4" stroke-linejoin="round"/>
<polygon points="1344.8,596.7 1348.4,596.7 1348.4,605.5 1344.8,605.5" fill="#f0f0f0" stroke="#444" stroke-width="0.4" stroke-linejoin="round"/>
<polygon points="1350.0,597.0 1353.6,597.0 1353.6,605.5 1350.0,605.5" fill="#f0f0f0" stroke="#444" stroke-width="0.4" stroke-linejoin="round"/>
<polygon points="1355.2,597.3 1358.8,597.3 1358.8,605.5 1355.2,605.5" fill="#f0f0f0" stroke="#444" stroke-width="0.4" stroke-linejoin="round"/>
<polygon points="1360.4,597.6 1364.0,597.6 1364.0,605.5 1360.4,605.5" fill="#f0f0f0" stroke="#444" stroke-width="0.4" stroke-linejoin="round"/>
<polygon points="1298.0,574.0 1312.0,573.0 1400.0,574.5 1380.0,588.0 1366.0,598.0 1296.0,591.0" fill="#d0d0d0" stroke="#3c3c3c" stroke-width="0.6" stroke-linejoin="round"/>
<line x1="1305.0" y1="585.0" x2="1385.0" y2="584.0" stroke="#999" stroke-width="0.5"/>
<line x1="1340.0" y1="573.0" x2="1330.0" y2="593.0" stroke="#999" stroke-width="0.5"/>
<polygon points="1298.0,574.0 1312.0,573.0 1312.0,581.0 1298.0,582.0" fill="#8a8a8a" stroke="#3c3c3c" stroke-width="0.5" stroke-linejoin="round"/>
<polygon points="1135.0,772.0 1218.0,689.0 1274.0,644.0 1305.0,632.0 1340.0,609.0 1360.0,602.0 1262.0,681.0 1280.0,700.0 1282.0,707.0 1223.0,732.0 1227.0,784.0" fill="#b0b0b0"/>
<polygon points="1316.5,608.3 1340.0,609.4 1266.0,686.0 1228.0,720.0 1212.0,745.0 1200.0,750.0 1240.0,700.0 1310.0,629.8" fill="url(#glass)" stroke="#3c3c3c" stroke-width="0.5" stroke-linejoin="round"/>
<polygon points="1135.0,772.0 1192.0,720.0 1248.0,668.0 1275.0,644.0 1275.0,629.0 1292.0,624.0 1285.0,617.0 1300.0,614.0 1316.0,606.0 1240.0,700.0 1200.0,750.0 1227.0,784.0" fill="#b4b4b4" stroke="#3c3c3c" stroke-width="0.6" stroke-linejoin="round"/>
<polygon points="1274.7,629.8 1300.4,613.7 1312.0,619.0 1292.0,634.0" fill="#c0c0c0" stroke="#3c3c3c" stroke-width="0.5" stroke-linejoin="round"/>
<line x1="1220.5" y1="698.0" x2="1237.0" y2="709.0" stroke="#555" stroke-width="0.6"/>
<line x1="1192.0" y1="720.0" x2="1212.0" y2="735.0" stroke="#555" stroke-width="0.6"/>
<line x1="1248.0" y1="668.0" x2="1262.0" y2="680.0" stroke="#666" stroke-width="0.5"/>
<polygon points="1218.0,689.0 1274.0,644.0 1305.0,632.0 1262.0,658.0 1245.0,684.0" fill="#bdbdbd" stroke="#3c3c3c" stroke-width="0.6" stroke-linejoin="round"/>
<polygon points="1262.0,658.0 1305.0,632.0 1364.7,597.0 1398.0,576.0 1440.0,558.0 1465.0,546.0 1472.0,544.0 1478.0,550.0 1478.0,562.0 1465.0,570.0 1440.0,584.0 1400.0,609.0 1310.0,671.0 1279.0,693.0 1262.0,681.0" fill="url(#vault)" stroke="#3c3c3c" stroke-width="0.6" stroke-linejoin="round"/>
<line x1="1275.0" y1="665.0" x2="1470.0" y2="556.0" stroke="#d2d2d2" stroke-width="1.3"/>
<line x1="1290.0" y1="688.0" x2="1476.0" y2="566.0" stroke="#9a9a9a" stroke-width="0.6"/>
<polygon points="1247.0,684.0 1262.0,681.0 1279.0,690.0 1280.0,710.0 1250.0,712.0" fill="#8a8a8a" stroke="#3c3c3c" stroke-width="0.5" stroke-linejoin="round"/>
<polygon points="1250.0,686.0 1276.0,688.0 1278.0,708.0 1252.0,709.0" fill="url(#glass)"/>
<line x1="1249.0" y1="686.0" x2="1251.0" y2="712.0" stroke="#333" stroke-width="1.6"/>
<line x1="1256.0" y1="685.0" x2="1258.0" y2="706.0" stroke="#333" stroke-width="1.6"/>
<line x1="1266.0" y1="683.0" x2="1267.0" y2="705.0" stroke="#333" stroke-width="1.0"/>
<line x1="1400.0" y1="593.0" x2="1403.0" y2="594.0" stroke="#555" stroke-width="0.6"/>
<line x1="1417.0" y1="582.0" x2="1420.0" y2="583.0" stroke="#555" stroke-width="0.6"/>
<line x1="1382.0" y1="595.0" x2="1385.0" y2="596.0" stroke="#555" stroke-width="0.6"/>
<polygon points="1588.0,588.0 1616.6,552.0 1612.0,660.0 1600.0,690.0 1582.0,702.0" fill="#a2a2a2" stroke="#3c3c3c" stroke-width="0.6" stroke-linejoin="round"/>
<polygon points="1588.0,640.0 1612.0,615.0 1605.0,690.0 1582.0,702.0" fill="#6a6a60"/>
<polygon points="1469.5,578.0 1588.0,588.0 1582.0,702.0 1470.0,690.0" fill="#5c5c5c" stroke="#3c3c3c" stroke-width="0.6" stroke-linejoin="round"/>
<polygon points="1471.0,596.0 1586.0,605.5 1586.0,613.5 1471.0,604.0" fill="#8e8e8e"/>
<polygon points="1471.0,611.0 1586.0,620.5 1586.0,630.5 1471.0,621.0" fill="#8e8e8e"/>
<polygon points="1471.0,625.0 1586.0,634.5 1586.0,644.5 1471.0,635.0" fill="#8e8e8e"/>
<polygon points="1471.0,640.0 1586.0,649.5 1586.0,659.5 1471.0,650.0" fill="#8e8e8e"/>
<polygon points="1471.0,655.0 1586.0,664.5 1586.0,673.5 1471.0,664.0" fill="#8e8e8e"/>
<polygon points="1473.7,586.6 1478.0,587.0 1478.0,595.5 1473.7,595.1" fill="#ececec"/><polygon points="1479.1,587.1 1483.5,587.5 1483.5,596.0 1479.1,595.6" fill="#ececec"/><polygon points="1484.6,587.6 1489.0,587.9 1489.0,596.4 1484.6,596.1" fill="#ececec"/><polygon points="1492.3,588.2 1496.7,588.6 1496.7,597.1 1492.3,596.7" fill="#ececec"/><polygon points="1497.8,588.7 1502.2,589.1 1502.2,597.6 1497.8,597.2" fill="#ececec"/><polygon points="1503.3,589.2 1507.7,589.5 1507.7,598.0 1503.3,597.7" fill="#ececec"/><polygon points="1511.0,589.8 1515.4,590.2 1515.4,598.7 1511.0,598.3" fill="#ececec"/><polygon points="1516.5,590.3 1520.9,590.6 1520.9,599.1 1516.5,598.8" fill="#ececec"/><polygon points="1522.0,590.7 1526.3,591.1 1526.3,599.6 1522.0,599.2" fill="#ececec"/><polygon points="1529.7,591.4 1534.0,591.8 1534.0,600.3 1529.7,599.9" fill="#ececec"/><polygon points="1535.1,591.9 1539.5,592.2 1539.5,600.7 1535.1,600.4" fill="#ececec"/><polygon points="1540.6,592.3 1545.0,592.7 1545.0,601.2 1540.6,600.8" fill="#ececec"/><polygon points="1548.3,593.0 1552.7,593.3 1552.7,601.8 1548.3,601.5" fill="#ececec"/><polygon points="1553.8,593.4 1558.2,593.8 1558.2,602.3 1553.8,601.9" fill="#ececec"/><polygon points="1559.3,593.9 1563.7,594.3 1563.7,602.8 1559.3,602.4" fill="#ececec"/><polygon points="1567.0,594.6 1571.4,594.9 1571.4,603.4 1567.0,603.1" fill="#ececec"/><polygon points="1572.5,595.0 1576.9,595.4 1576.9,603.9 1572.5,603.5" fill="#ececec"/><polygon points="1578.0,595.5 1582.3,595.9 1582.3,604.4 1578.0,604.0" fill="#ececec"/>
<polygon points="1473.7,604.1 1478.0,604.5 1478.0,614.5 1473.7,614.1" fill="#ececec"/><polygon points="1479.1,604.6 1483.5,605.0 1483.5,615.0 1479.1,614.6" fill="#ececec"/><polygon points="1484.6,605.1 1489.0,605.4 1489.0,615.4 1484.6,615.1" fill="#ececec"/><polygon points="1492.3,605.7 1496.7,606.1 1496.7,616.1 1492.3,615.7" fill="#ececec"/><polygon points="1497.8,606.2 1502.2,606.6 1502.2,616.6 1497.8,616.2" fill="#ececec"/><polygon points="1503.3,606.7 1507.7,607.0 1507.7,617.0 1503.3,616.7" fill="#ececec"/><polygon points="1511.0,607.3 1515.4,607.7 1515.4,617.7 1511.0,617.3" fill="#ececec"/><polygon points="1516.5,607.8 1520.9,608.1 1520.9,618.1 1516.5,617.8" fill="#ececec"/><polygon points="1522.0,608.2 1526.3,608.6 1526.3,618.6 1522.0,618.2" fill="#ececec"/><polygon points="1529.7,608.9 1534.0,609.3 1534.0,619.3 1529.7,618.9" fill="#ececec"/><polygon points="1535.1,609.4 1539.5,609.7 1539.5,619.7 1535.1,619.4" fill="#ececec"/><polygon points="1540.6,609.8 1545.0,610.2 1545.0,620.2 1540.6,619.8" fill="#ececec"/><polygon points="1548.3,610.5 1552.7,610.8 1552.7,620.8 1548.3,620.5" fill="#ececec"/><polygon points="1553.8,610.9 1558.2,611.3 1558.2,621.3 1553.8,620.9" fill="#ececec"/><polygon points="1559.3,611.4 1563.7,611.8 1563.7,621.8 1559.3,621.4" fill="#ececec"/><polygon points="1567.0,612.1 1571.4,612.4 1571.4,622.4 1567.0,622.1" fill="#ececec"/><polygon points="1572.5,612.5 1576.9,612.9 1576.9,622.9 1572.5,622.5" fill="#ececec"/><polygon points="1578.0,613.0 1582.3,613.4 1582.3,623.4 1578.0,623.0" fill="#ececec"/>
<polygon points="1473.7,621.1 1478.0,621.5 1478.0,629.0 1473.7,628.6" fill="#ececec"/><polygon points="1479.1,621.6 1483.5,622.0 1483.5,629.5 1479.1,629.1" fill="#ececec"/><polygon points="1484.6,622.1 1489.0,622.4 1489.0,629.9 1484.6,629.6" fill="#ececec"/><polygon points="1492.3,622.7 1496.7,623.1 1496.7,630.6 1492.3,630.2" fill="#ececec"/><polygon points="1497.8,623.2 1502.2,623.6 1502.2,631.1 1497.8,630.7" fill="#ececec"/><polygon points="1503.3,623.7 1507.7,624.0 1507.7,631.5 1503.3,631.2" fill="#ececec"/><polygon points="1511.0,624.3 1515.4,624.7 1515.4,632.2 1511.0,631.8" fill="#ececec"/><polygon points="1516.5,624.8 1520.9,625.1 1520.9,632.6 1516.5,632.3" fill="#ececec"/><polygon points="1522.0,625.2 1526.3,625.6 1526.3,633.1 1522.0,632.7" fill="#ececec"/><polygon points="1529.7,625.9 1534.0,626.3 1534.0,633.8 1529.7,633.4" fill="#ececec"/><polygon points="1535.1,626.4 1539.5,626.7 1539.5,634.2 1535.1,633.9" fill="#ececec"/><polygon points="1540.6,626.8 1545.0,627.2 1545.0,634.7 1540.6,634.3" fill="#ececec"/><polygon points="1548.3,627.5 1552.7,627.8 1552.7,635.3 1548.3,635.0" fill="#ececec"/><polygon points="1553.8,627.9 1558.2,628.3 1558.2,635.8 1553.8,635.4" fill="#ececec"/><polygon points="1559.3,628.4 1563.7,628.8 1563.7,636.3 1559.3,635.9" fill="#ececec"/><polygon points="1567.0,629.1 1571.4,629.4 1571.4,636.9 1567.0,636.6" fill="#ececec"/><polygon points="1572.5,629.5 1576.9,629.9 1576.9,637.4 1572.5,637.0" fill="#ececec"/><polygon points="1578.0,630.0 1582.3,630.4 1582.3,637.9 1578.0,637.5" fill="#ececec"/>
<polygon points="1473.7,635.6 1478.0,636.0 1478.0,643.5 1473.7,643.1" fill="#ececec"/><polygon points="1479.1,636.1 1483.5,636.5 1483.5,644.0 1479.1,643.6" fill="#ececec"/><polygon points="1484.6,636.6 1489.0,636.9 1489.0,644.4 1484.6,644.1" fill="#ececec"/><polygon points="1492.3,637.2 1496.7,637.6 1496.7,645.1 1492.3,644.7" fill="#ececec"/><polygon points="1497.8,637.7 1502.2,638.1 1502.2,645.6 1497.8,645.2" fill="#ececec"/><polygon points="1503.3,638.2 1507.7,638.5 1507.7,646.0 1503.3,645.7" fill="#ececec"/><polygon points="1511.0,638.8 1515.4,639.2 1515.4,646.7 1511.0,646.3" fill="#ececec"/><polygon points="1516.5,639.3 1520.9,639.6 1520.9,647.1 1516.5,646.8" fill="#ececec"/><polygon points="1522.0,639.7 1526.3,640.1 1526.3,647.6 1522.0,647.2" fill="#ececec"/><polygon points="1529.7,640.4 1534.0,640.8 1534.0,648.3 1529.7,647.9" fill="#ececec"/><polygon points="1535.1,640.9 1539.5,641.2 1539.5,648.7 1535.1,648.4" fill="#ececec"/><polygon points="1540.6,641.3 1545.0,641.7 1545.0,649.2 1540.6,648.8" fill="#ececec"/><polygon points="1548.3,642.0 1552.7,642.3 1552.7,649.8 1548.3,649.5" fill="#ececec"/><polygon points="1553.8,642.4 1558.2,642.8 1558.2,650.3 1553.8,649.9" fill="#ececec"/><polygon points="1559.3,642.9 1563.7,643.3 1563.7,650.8 1559.3,650.4" fill="#ececec"/><polygon points="1567.0,643.6 1571.4,643.9 1571.4,651.4 1567.0,651.1" fill="#ececec"/><polygon points="1572.5,644.0 1576.9,644.4 1576.9,651.9 1572.5,651.5" fill="#ececec"/><polygon points="1578.0,644.5 1582.3,644.9 1582.3,652.4 1578.0,652.0" fill="#ececec"/>
<polygon points="1473.7,651.1 1478.0,651.5 1478.0,659.5 1473.7,659.1" fill="#ececec"/><polygon points="1479.1,651.6 1483.5,652.0 1483.5,660.0 1479.1,659.6" fill="#ececec"/><polygon points="1484.6,652.1 1489.0,652.4 1489.0,660.4 1484.6,660.1" fill="#ececec"/><polygon points="1492.3,652.7 1496.7,653.1 1496.7,661.1 1492.3,660.7" fill="#ececec"/><polygon points="1497.8,653.2 1502.2,653.6 1502.2,661.6 1497.8,661.2" fill="#ececec"/><polygon points="1503.3,653.7 1507.7,654.0 1507.7,662.0 1503.3,661.7" fill="#ececec"/><polygon points="1511.0,654.3 1515.4,654.7 1515.4,662.7 1511.0,662.3" fill="#ececec"/><polygon points="1516.5,654.8 1520.9,655.1 1520.9,663.1 1516.5,662.8" fill="#ececec"/><polygon points="1522.0,655.2 1526.3,655.6 1526.3,663.6 1522.0,663.2" fill="#ececec"/><polygon points="1529.7,655.9 1534.0,656.3 1534.0,664.3 1529.7,663.9" fill="#ececec"/><polygon points="1535.1,656.4 1539.5,656.7 1539.5,664.7 1535.1,664.4" fill="#ececec"/><polygon points="1540.6,656.8 1545.0,657.2 1545.0,665.2 1540.6,664.8" fill="#ececec"/><polygon points="1548.3,657.5 1552.7,657.8 1552.7,665.8 1548.3,665.5" fill="#ececec"/><polygon points="1553.8,657.9 1558.2,658.3 1558.2,666.3 1553.8,665.9" fill="#ececec"/><polygon points="1559.3,658.4 1563.7,658.8 1563.7,666.8 1559.3,666.4" fill="#ececec"/><polygon points="1567.0,659.1 1571.4,659.4 1571.4,667.4 1567.0,667.1" fill="#ececec"/><polygon points="1572.5,659.5 1576.9,659.9 1576.9,667.9 1572.5,667.5" fill="#ececec"/><polygon points="1578.0,660.0 1582.3,660.4 1582.3,668.4 1578.0,668.0" fill="#ececec"/>
<polygon points="1470.0,675.0 1583.0,684.0 1582.0,702.0 1470.0,690.0" fill="#cfe0e4" stroke="#3c3c3c" stroke-width="0.5" stroke-linejoin="round"/>
<line x1="1471.0" y1="675.0" x2="1471.0" y2="690.0" stroke="#555" stroke-width="0.5"/>
<line x1="1475.6" y1="675.4" x2="1475.6" y2="690.5" stroke="#555" stroke-width="0.5"/>
<line x1="1480.2" y1="675.8" x2="1480.2" y2="691.0" stroke="#555" stroke-width="0.5"/>
<line x1="1484.9" y1="676.1" x2="1484.9" y2="691.5" stroke="#555" stroke-width="0.5"/>
<line x1="1489.5" y1="676.5" x2="1489.5" y2="692.0" stroke="#555" stroke-width="0.5"/>
<line x1="1494.1" y1="676.9" x2="1494.1" y2="692.5" stroke="#555" stroke-width="0.5"/>
<line x1="1498.8" y1="677.2" x2="1498.8" y2="693.0" stroke="#555" stroke-width="0.5"/>
<line x1="1503.4" y1="677.6" x2="1503.4" y2="693.5" stroke="#555" stroke-width="0.5"/>
<line x1="1508.0" y1="678.0" x2="1508.0" y2="694.0" stroke="#555" stroke-width="0.5"/>
<line x1="1512.6" y1="678.4" x2="1512.6" y2="694.5" stroke="#555" stroke-width="0.5"/>
<line x1="1517.2" y1="678.8" x2="1517.2" y2="695.0" stroke="#555" stroke-width="0.5"/>
<line x1="1521.9" y1="679.1" x2="1521.9" y2="695.5" stroke="#555" stroke-width="0.5"/>
<line x1="1526.5" y1="679.5" x2="1526.5" y2="696.0" stroke="#555" stroke-width="0.5"/>
<line x1="1531.1" y1="679.9" x2="1531.1" y2="696.5" stroke="#555" stroke-width="0.5"/>
<line x1="1535.8" y1="680.2" x2="1535.8" y2="697.0" stroke="#555" stroke-width="0.5"/>
<line x1="1540.4" y1="680.6" x2="1540.4" y2="697.5" stroke="#555" stroke-width="0.5"/>
<line x1="1545.0" y1="681.0" x2="1545.0" y2="698.0" stroke="#555" stroke-width="0.5"/>
<line x1="1549.6" y1="681.4" x2="1549.6" y2="698.5" stroke="#555" stroke-width="0.5"/>
<line x1="1554.2" y1="681.8" x2="1554.2" y2="699.0" stroke="#555" stroke-width="0.5"/>
<line x1="1558.9" y1="682.1" x2="1558.9" y2="699.5" stroke="#555" stroke-width="0.5"/>
<line x1="1563.5" y1="682.5" x2="1563.5" y2="700.0" stroke="#555" stroke-width="0.5"/>
<line x1="1568.1" y1="682.9" x2="1568.1" y2="700.5" stroke="#555" stroke-width="0.5"/>
<line x1="1572.8" y1="683.2" x2="1572.8" y2="701.0" stroke="#555" stroke-width="0.5"/>
<line x1="1577.4" y1="683.6" x2="1577.4" y2="701.5" stroke="#555" stroke-width="0.5"/>
<line x1="1582.0" y1="684.0" x2="1582.0" y2="702.0" stroke="#555" stroke-width="0.5"/>
<polygon points="1469.5,577.0 1511.6,546.9 1616.6,552.0 1588.2,588.2" fill="#6a52bc" stroke="#3c3c3c" stroke-width="0.6" stroke-linejoin="round"/>
<polygon points="1498.0,562.0 1525.0,563.5 1520.0,571.0 1490.0,569.0" fill="#dcdcdc" stroke="#3c3c3c" stroke-width="0.4" stroke-linejoin="round"/>
<polygon points="1525.0,553.0 1568.0,555.0 1562.0,574.0 1518.0,572.0" fill="#8a8a8a" stroke="#3c3c3c" stroke-width="0.5" stroke-linejoin="round"/>
<polygon points="1555.0,568.0 1590.0,570.0 1582.0,584.0 1548.0,582.0" fill="#e2e2e2" stroke="#3c3c3c" stroke-width="0.4" stroke-linejoin="round"/>
<polygon points="1474.0,574.0 1540.0,578.0 1545.0,583.0 1475.0,578.0" fill="#4a48c8"/>
<polygon points="1594.0,563.0 1602.0,563.0 1601.0,571.0 1593.0,571.0" fill="#ff8a10"/>
<polygon points="1600.0,588.0 1820.0,594.0 1801.0,615.0 1796.0,691.0 1596.0,691.0" fill="#595959" stroke="#3c3c3c" stroke-width="0.6" stroke-linejoin="round"/>
<polygon points="1605.4,594.3 1609.0,594.4 1609.0,604.0 1605.4,603.9" fill="#ededed"/><polygon points="1609.9,594.5 1613.5,594.6 1613.5,604.2 1609.9,604.1" fill="#ededed"/><polygon points="1618.2,594.8 1621.8,594.9 1621.8,604.5 1618.2,604.4" fill="#ededed"/><polygon points="1622.7,595.0 1626.3,595.1 1626.3,604.7 1622.7,604.6" fill="#ededed"/><polygon points="1631.0,595.3 1634.6,595.4 1634.6,605.0 1631.0,604.9" fill="#ededed"/><polygon points="1635.5,595.5 1639.1,595.6 1639.1,605.2 1635.5,605.1" fill="#ededed"/><polygon points="1643.9,595.8 1647.5,595.9 1647.5,605.5 1643.9,605.4" fill="#ededed"/><polygon points="1648.4,596.0 1652.0,596.1 1652.0,605.7 1648.4,605.6" fill="#ededed"/><polygon points="1656.7,596.3 1660.3,596.4 1660.3,606.0 1656.7,605.9" fill="#ededed"/><polygon points="1661.2,596.5 1664.8,596.6 1664.8,606.2 1661.2,606.1" fill="#ededed"/><polygon points="1669.5,596.8 1673.1,596.9 1673.1,606.5 1669.5,606.4" fill="#ededed"/><polygon points="1674.0,597.0 1677.6,597.1 1677.6,606.7 1674.0,606.6" fill="#ededed"/>
<polygon points="1684.2,597.3 1687.5,597.4 1687.5,607.0 1684.2,606.9" fill="#ededed"/><polygon points="1688.3,597.4 1691.6,597.5 1691.6,607.1 1688.3,607.0" fill="#ededed"/><polygon points="1696.0,597.7 1699.3,597.8 1699.3,607.4 1696.0,607.3" fill="#ededed"/><polygon points="1700.1,597.8 1703.4,597.9 1703.4,607.5 1700.1,607.4" fill="#ededed"/><polygon points="1707.8,598.1 1711.1,598.2 1711.1,607.8 1707.8,607.7" fill="#ededed"/><polygon points="1711.9,598.2 1715.2,598.3 1715.2,607.9 1711.9,607.8" fill="#ededed"/><polygon points="1719.6,598.5 1722.9,598.6 1722.9,608.2 1719.6,608.1" fill="#ededed"/><polygon points="1723.7,598.6 1727.0,598.7 1727.0,608.3 1723.7,608.2" fill="#ededed"/><polygon points="1731.4,598.9 1734.7,599.0 1734.7,608.6 1731.4,608.5" fill="#ededed"/><polygon points="1735.5,599.0 1738.8,599.1 1738.8,608.7 1735.5,608.6" fill="#ededed"/><polygon points="1743.2,599.3 1746.5,599.4 1746.5,609.0 1743.2,608.9" fill="#ededed"/><polygon points="1747.3,599.4 1750.6,599.5 1750.6,609.1 1747.3,609.0" fill="#ededed"/><polygon points="1755.0,599.7 1758.3,599.8 1758.3,609.4 1755.0,609.3" fill="#ededed"/><polygon points="1759.1,599.8 1762.4,599.9 1762.4,609.5 1759.1,609.4" fill="#ededed"/><polygon points="1766.8,600.1 1770.1,600.2 1770.1,609.8 1766.8,609.7" fill="#ededed"/><polygon points="1770.9,600.2 1774.2,600.3 1774.2,609.9 1770.9,609.8" fill="#ededed"/><polygon points="1778.6,600.5 1781.9,600.6 1781.9,610.2 1778.6,610.1" fill="#ededed"/><polygon points="1782.7,600.6 1786.0,600.7 1786.0,610.3 1782.7,610.2" fill="#ededed"/><polygon points="1790.4,600.9 1793.7,601.0 1793.7,610.6 1790.4,610.5" fill="#ededed"/><polygon points="1794.5,601.0 1797.8,601.1 1797.8,610.7 1794.5,610.6" fill="#ededed"/>
<polygon points="1605.4,611.1 1609.0,611.2 1609.0,619.2 1605.4,619.1" fill="#ededed"/><polygon points="1609.9,611.2 1613.5,611.3 1613.5,619.3 1609.9,619.2" fill="#ededed"/><polygon points="1618.2,611.4 1621.8,611.5 1621.8,619.5 1618.2,619.4" fill="#ededed"/><polygon points="1622.7,611.5 1626.3,611.6 1626.3,619.6 1622.7,619.5" fill="#ededed"/><polygon points="1631.0,611.7 1634.6,611.8 1634.6,619.8 1631.0,619.7" fill="#ededed"/><polygon points="1635.5,611.8 1639.1,611.9 1639.1,619.9 1635.5,619.8" fill="#ededed"/><polygon points="1643.9,612.1 1647.5,612.2 1647.5,620.2 1643.9,620.1" fill="#ededed"/><polygon points="1648.4,612.2 1652.0,612.3 1652.0,620.3 1648.4,620.2" fill="#ededed"/><polygon points="1656.7,612.4 1660.3,612.5 1660.3,620.5 1656.7,620.4" fill="#ededed"/><polygon points="1661.2,612.5 1664.8,612.6 1664.8,620.6 1661.2,620.5" fill="#ededed"/><polygon points="1669.5,612.7 1673.1,612.8 1673.1,620.8 1669.5,620.7" fill="#ededed"/><polygon points="1674.0,612.8 1677.6,612.9 1677.6,620.9 1674.0,620.8" fill="#ededed"/>
<polygon points="1684.2,614.1 1687.5,614.1 1687.5,622.1 1684.2,622.1" fill="#ededed"/><polygon points="1688.3,614.2 1691.6,614.2 1691.6,622.2 1688.3,622.2" fill="#ededed"/><polygon points="1696.0,614.4 1699.3,614.4 1699.3,622.4 1696.0,622.4" fill="#ededed"/><polygon points="1700.1,614.5 1703.4,614.5 1703.4,622.5 1700.1,622.5" fill="#ededed"/><polygon points="1707.8,614.7 1711.1,614.7 1711.1,622.7 1707.8,622.7" fill="#ededed"/><polygon points="1711.9,614.8 1715.2,614.8 1715.2,622.8 1711.9,622.8" fill="#ededed"/><polygon points="1719.6,615.0 1722.9,615.0 1722.9,623.0 1719.6,623.0" fill="#ededed"/><polygon points="1723.7,615.1 1727.0,615.1 1727.0,623.1 1723.7,623.1" fill="#ededed"/><polygon points="1731.4,615.3 1734.7,615.3 1734.7,623.3 1731.4,623.3" fill="#ededed"/><polygon points="1735.5,615.4 1738.8,615.4 1738.8,623.4 1735.5,623.4" fill="#ededed"/><polygon points="1743.2,615.6 1746.5,615.6 1746.5,623.6 1743.2,623.6" fill="#ededed"/><polygon points="1747.3,615.7 1750.6,615.7 1750.6,623.7 1747.3,623.7" fill="#ededed"/><polygon points="1755.0,615.9 1758.3,615.9 1758.3,623.9 1755.0,623.9" fill="#ededed"/><polygon points="1759.1,616.0 1762.4,616.0 1762.4,624.0 1759.1,624.0" fill="#ededed"/><polygon points="1766.8,616.2 1770.1,616.2 1770.1,624.2 1766.8,624.2" fill="#ededed"/><polygon points="1770.9,616.3 1774.2,616.3 1774.2,624.3 1770.9,624.3" fill="#ededed"/><polygon points="1778.6,616.5 1781.9,616.5 1781.9,624.5 1778.6,624.5" fill="#ededed"/><polygon points="1782.7,616.6 1786.0,616.6 1786.0,624.6 1782.7,624.6" fill="#ededed"/><polygon points="1790.4,616.8 1793.7,616.8 1793.7,624.8 1790.4,624.8" fill="#ededed"/><polygon points="1794.5,616.9 1797.8,616.9 1797.8,624.9 1794.5,624.9" fill="#ededed"/>
<polygon points="1596.0,624.0 1678.0,629.0 1677.6,680.0 1596.0,673.0" fill="#c5bda5" stroke="#3c3c3c" stroke-width="0.6" stroke-linejoin="round"/>
<polygon points="1598.8,632.2 1603.8,632.5 1603.8,638.9 1598.8,638.6" fill="#f0f0f0" stroke="#444" stroke-width="0.5" stroke-linejoin="round"/><polygon points="1605.4,632.6 1610.4,632.9 1610.4,639.4 1605.4,639.0" fill="#f0f0f0" stroke="#444" stroke-width="0.5" stroke-linejoin="round"/><polygon points="1612.0,633.0 1617.0,633.3 1617.0,639.8 1612.0,639.5" fill="#f0f0f0" stroke="#444" stroke-width="0.5" stroke-linejoin="round"/><polygon points="1618.5,633.4 1623.5,633.8 1623.5,640.3 1618.5,639.9" fill="#f0f0f0" stroke="#444" stroke-width="0.5" stroke-linejoin="round"/><polygon points="1625.1,633.9 1630.1,634.2 1630.1,640.7 1625.1,640.4" fill="#f0f0f0" stroke="#444" stroke-width="0.5" stroke-linejoin="round"/><polygon points="1631.7,634.3 1636.7,634.6 1636.7,641.1 1631.7,640.8" fill="#f0f0f0" stroke="#444" stroke-width="0.5" stroke-linejoin="round"/><polygon points="1638.3,634.7 1643.3,635.0 1643.3,641.6 1638.3,641.2" fill="#f0f0f0" stroke="#444" stroke-width="0.5" stroke-linejoin="round"/><polygon points="1644.9,635.1 1649.9,635.5 1649.9,642.0 1644.9,641.7" fill="#f0f0f0" stroke="#444" stroke-width="0.5" stroke-linejoin="round"/><polygon points="1651.5,635.6 1656.5,635.9 1656.5,642.4 1651.5,642.1" fill="#f0f0f0" stroke="#444" stroke-width="0.5" stroke-linejoin="round"/><polygon points="1658.0,636.0 1663.0,636.3 1663.0,642.9 1658.0,642.5" fill="#f0f0f0" stroke="#444" stroke-width="0.5" stroke-linejoin="round"/><polygon points="1664.6,636.4 1669.6,636.7 1669.6,643.3 1664.6,643.0" fill="#f0f0f0" stroke="#444" stroke-width="0.5" stroke-linejoin="round"/><polygon points="1671.2,636.8 1676.2,637.1 1676.2,643.7 1671.2,643.4" fill="#f0f0f0" stroke="#444" stroke-width="0.5" stroke-linejoin="round"/><polygon points="1598.8,646.8 1603.8,647.2 1603.8,653.6 1598.8,653.3" fill="#f0f0f0" stroke="#444" stroke-width="0.5" stroke-linejoin="round"/><polygon points="1605.4,647.3 1610.4,647.6 1610.4,654.1 1605.4,653.7" fill="#f0f0f0" stroke="#444" stroke-width="0.5" stroke-linejoin="round"/><polygon points="1612.0,647.7 1617.0,648.1 1617.0,654.6 1612.0,654.2" fill="#f0f0f0" stroke="#444" stroke-width="0.5" stroke-linejoin="round"/><polygon points="1618.5,648.2 1623.5,648.5 1623.5,655.0 1618.5,654.7" fill="#f0f0f0" stroke="#444" stroke-width="0.5" stroke-linejoin="round"/><polygon points="1625.1,648.6 1630.1,649.0 1630.1,655.5 1625.1,655.1" fill="#f0f0f0" stroke="#444" stroke-width="0.5" stroke-linejoin="round"/><polygon points="1631.7,649.1 1636.7,649.4 1636.7,656.0 1631.7,655.6" fill="#f0f0f0" stroke="#444" stroke-width="0.5" stroke-linejoin="round"/><polygon points="1638.3,649.5 1643.3,649.9 1643.3,656.4 1638.3,656.1" fill="#f0f0f0" stroke="#444" stroke-width="0.5" stroke-linejoin="round"/><polygon points="1644.9,650.0 1649.9,650.3 1649.9,656.9 1644.9,656.5" fill="#f0f0f0" stroke="#444" stroke-width="0.5" stroke-linejoin="round"/><polygon points="1651.5,650.4 1656.5,650.8 1656.5,657.4 1651.5,657.0" fill="#f0f0f0" stroke="#444" stroke-width="0.5" stroke-linejoin="round"/><polygon points="1658.0,650.9 1663.0,651.2 1663.0,657.8 1658.0,657.5" fill="#f0f0f0" stroke="#444" stroke-width="0.5" stroke-linejoin="round"/><polygon points="1664.6,651.3 1669.6,651.7 1669.6,658.3 1664.6,657.9" fill="#f0f0f0" stroke="#444" stroke-width="0.5" stroke-linejoin="round"/><polygon points="1671.2,651.8 1676.2,652.1 1676.2,658.7 1671.2,658.4" fill="#f0f0f0" stroke="#444" stroke-width="0.5" stroke-linejoin="round"/><polygon points="1598.8,661.5 1603.8,661.9 1603.8,668.3 1598.8,668.0" fill="#f0f0f0" stroke="#444" stroke-width="0.5" stroke-linejoin="round"/><polygon points="1605.4,662.0 1610.4,662.3 1610.4,668.8 1605.4,668.4" fill="#f0f0f0" stroke="#444" stroke-width="0.5" stroke-linejoin="round"/><polygon points="1612.0,662.5 1617.0,662.8 1617.0,669.3 1612.0,668.9" fill="#f0f0f0" stroke="#444" stroke-width="0.5" stroke-linejoin="round"/><polygon points="1618.5,662.9 1623.5,663.3 1623.5,669.8 1618.5,669.4" fill="#f0f0f0" stroke="#444" stroke-width="0.5" stroke-linejoin="round"/><polygon points="1625.1,663.4 1630.1,663.8 1630.1,670.3 1625.1,669.9" fill="#f0f0f0" stroke="#444" stroke-width="0.5" stroke-linejoin="round"/><polygon points="1631.7,663.9 1636.7,664.3 1636.7,670.8 1631.7,670.4" fill="#f0f0f0" stroke="#444" stroke-width="0.5" stroke-linejoin="round"/><polygon points="1638.3,664.4 1643.3,664.7 1643.3,671.3 1638.3,670.9" fill="#f0f0f0" stroke="#444" stroke-width="0.5" stroke-linejoin="round"/><polygon points="1644.9,664.9 1649.9,665.2 1649.9,671.8 1644.9,671.4" fill="#f0f0f0" stroke="#444" stroke-width="0.5" stroke-linejoin="round"/><polygon points="1651.5,665.3 1656.5,665.7 1656.5,672.3 1651.5,671.9" fill="#f0f0f0" stroke="#444" stroke-width="0.5" stroke-linejoin="round"/><polygon points="1658.0,665.8 1663.0,666.2 1663.0,672.8 1658.0,672.4" fill="#f0f0f0" stroke="#444" stroke-width="0.5" stroke-linejoin="round"/><polygon points="1664.6,666.3 1669.6,666.7 1669.6,673.2 1664.6,672.9" fill="#f0f0f0" stroke="#444" stroke-width="0.5" stroke-linejoin="round"/><polygon points="1671.2,666.8 1676.2,667.1 1676.2,673.7 1671.2,673.4" fill="#f0f0f0" stroke="#444" stroke-width="0.5" stroke-linejoin="round"/>
<polygon points="1678.0,629.0 1800.0,631.0 1797.0,675.0 1677.6,680.0" fill="#c5bda5" stroke="#3c3c3c" stroke-width="0.6" stroke-linejoin="round"/>
<polygon points="1681.7,637.3 1686.0,637.4 1686.0,644.1 1681.7,644.0" fill="#e8e8e8" stroke="#444" stroke-width="0.4" stroke-linejoin="round"/><polygon points="1687.1,637.4 1691.3,637.4 1691.3,644.1 1687.1,644.1" fill="#e8e8e8" stroke="#444" stroke-width="0.4" stroke-linejoin="round"/><polygon points="1692.4,637.4 1696.7,637.5 1696.7,644.1 1692.4,644.1" fill="#e8e8e8" stroke="#444" stroke-width="0.4" stroke-linejoin="round"/><polygon points="1697.8,637.5 1702.0,637.6 1702.0,644.1 1697.7,644.1" fill="#e8e8e8" stroke="#444" stroke-width="0.4" stroke-linejoin="round"/><polygon points="1705.5,637.6 1709.8,637.7 1709.7,644.2 1705.4,644.2" fill="#e8e8e8" stroke="#444" stroke-width="0.4" stroke-linejoin="round"/><polygon points="1710.8,637.7 1715.1,637.7 1715.0,644.2 1710.8,644.2" fill="#e8e8e8" stroke="#444" stroke-width="0.4" stroke-linejoin="round"/><polygon points="1716.2,637.7 1720.5,637.8 1720.4,644.2 1716.1,644.2" fill="#e8e8e8" stroke="#444" stroke-width="0.4" stroke-linejoin="round"/><polygon points="1721.5,637.8 1725.8,637.8 1725.7,644.3 1721.4,644.2" fill="#e8e8e8" stroke="#444" stroke-width="0.4" stroke-linejoin="round"/><polygon points="1729.2,637.9 1733.5,637.9 1733.4,644.3 1729.1,644.3" fill="#e8e8e8" stroke="#444" stroke-width="0.4" stroke-linejoin="round"/><polygon points="1734.6,638.0 1738.9,638.0 1738.7,644.3 1734.5,644.3" fill="#e8e8e8" stroke="#444" stroke-width="0.4" stroke-linejoin="round"/><polygon points="1739.9,638.0 1744.2,638.1 1744.1,644.3 1739.8,644.3" fill="#e8e8e8" stroke="#444" stroke-width="0.4" stroke-linejoin="round"/><polygon points="1745.3,638.1 1749.6,638.1 1749.4,644.4 1745.1,644.3" fill="#e8e8e8" stroke="#444" stroke-width="0.4" stroke-linejoin="round"/><polygon points="1753.0,638.2 1757.3,638.2 1757.1,644.4 1752.8,644.4" fill="#e8e8e8" stroke="#444" stroke-width="0.4" stroke-linejoin="round"/><polygon points="1758.4,638.2 1762.6,638.3 1762.4,644.4 1758.2,644.4" fill="#e8e8e8" stroke="#444" stroke-width="0.4" stroke-linejoin="round"/><polygon points="1763.7,638.3 1768.0,638.4 1767.8,644.5 1763.5,644.4" fill="#e8e8e8" stroke="#444" stroke-width="0.4" stroke-linejoin="round"/><polygon points="1769.1,638.4 1773.3,638.4 1773.1,644.5 1768.8,644.5" fill="#e8e8e8" stroke="#444" stroke-width="0.4" stroke-linejoin="round"/><polygon points="1776.8,638.5 1781.1,638.5 1780.8,644.5 1776.5,644.5" fill="#e8e8e8" stroke="#444" stroke-width="0.4" stroke-linejoin="round"/><polygon points="1782.1,638.5 1786.4,638.6 1786.1,644.5 1781.9,644.5" fill="#e8e8e8" stroke="#444" stroke-width="0.4" stroke-linejoin="round"/><polygon points="1787.5,638.6 1791.7,638.6 1791.5,644.6 1787.2,644.5" fill="#e8e8e8" stroke="#444" stroke-width="0.4" stroke-linejoin="round"/><polygon points="1792.8,638.7 1797.1,638.7 1796.8,644.6 1792.5,644.6" fill="#e8e8e8" stroke="#444" stroke-width="0.4" stroke-linejoin="round"/><polygon points="1681.7,652.6 1686.0,652.6 1686.0,659.3 1681.7,659.4" fill="#e8e8e8" stroke="#444" stroke-width="0.4" stroke-linejoin="round"/><polygon points="1687.0,652.6 1691.3,652.6 1691.3,659.2 1687.0,659.3" fill="#e8e8e8" stroke="#444" stroke-width="0.4" stroke-linejoin="round"/><polygon points="1692.3,652.6 1696.6,652.5 1696.6,659.2 1692.3,659.2" fill="#e8e8e8" stroke="#444" stroke-width="0.4" stroke-linejoin="round"/><polygon points="1697.7,652.5 1701.9,652.5 1701.9,659.1 1697.6,659.2" fill="#e8e8e8" stroke="#444" stroke-width="0.4" stroke-linejoin="round"/><polygon points="1705.3,652.5 1709.6,652.5 1709.5,659.0 1705.3,659.1" fill="#e8e8e8" stroke="#444" stroke-width="0.4" stroke-linejoin="round"/><polygon points="1710.7,652.5 1714.9,652.5 1714.8,658.9 1710.6,659.0" fill="#e8e8e8" stroke="#444" stroke-width="0.4" stroke-linejoin="round"/><polygon points="1716.0,652.5 1720.2,652.4 1720.1,658.9 1715.9,658.9" fill="#e8e8e8" stroke="#444" stroke-width="0.4" stroke-linejoin="round"/><polygon points="1721.3,652.4 1725.5,652.4 1725.4,658.8 1721.2,658.9" fill="#e8e8e8" stroke="#444" stroke-width="0.4" stroke-linejoin="round"/><polygon points="1729.0,652.4 1733.2,652.4 1733.1,658.7 1728.9,658.8" fill="#e8e8e8" stroke="#444" stroke-width="0.4" stroke-linejoin="round"/><polygon points="1734.3,652.4 1738.5,652.3 1738.4,658.7 1734.2,658.7" fill="#e8e8e8" stroke="#444" stroke-width="0.4" stroke-linejoin="round"/><polygon points="1739.6,652.3 1743.9,652.3 1743.7,658.6 1739.5,658.6" fill="#e8e8e8" stroke="#444" stroke-width="0.4" stroke-linejoin="round"/><polygon points="1744.9,652.3 1749.2,652.3 1749.0,658.5 1744.8,658.6" fill="#e8e8e8" stroke="#444" stroke-width="0.4" stroke-linejoin="round"/><polygon points="1752.6,652.3 1756.9,652.3 1756.7,658.4 1752.4,658.5" fill="#e8e8e8" stroke="#444" stroke-width="0.4" stroke-linejoin="round"/><polygon points="1757.9,652.3 1762.2,652.2 1762.0,658.4 1757.7,658.4" fill="#e8e8e8" stroke="#444" stroke-width="0.4" stroke-linejoin="round"/><polygon points="1763.2,652.2 1767.5,652.2 1767.3,658.3 1763.0,658.4" fill="#e8e8e8" stroke="#444" stroke-width="0.4" stroke-linejoin="round"/><polygon points="1768.6,652.2 1772.8,652.2 1772.6,658.2 1768.3,658.3" fill="#e8e8e8" stroke="#444" stroke-width="0.4" stroke-linejoin="round"/><polygon points="1776.2,652.2 1780.5,652.2 1780.2,658.1 1776.0,658.2" fill="#e8e8e8" stroke="#444" stroke-width="0.4" stroke-linejoin="round"/><polygon points="1781.5,652.1 1785.8,652.1 1785.5,658.1 1781.3,658.1" fill="#e8e8e8" stroke="#444" stroke-width="0.4" stroke-linejoin="round"/><polygon points="1786.9,652.1 1791.1,652.1 1790.8,658.0 1786.6,658.1" fill="#e8e8e8" stroke="#444" stroke-width="0.4" stroke-linejoin="round"/><polygon points="1792.2,652.1 1796.4,652.1 1796.1,658.0 1791.9,658.0" fill="#e8e8e8" stroke="#444" stroke-width="0.4" stroke-linejoin="round"/><polygon points="1681.7,667.9 1685.9,667.8 1685.9,674.5 1681.7,674.7" fill="#e8e8e8" stroke="#444" stroke-width="0.4" stroke-linejoin="round"/><polygon points="1687.0,667.8 1691.2,667.7 1691.2,674.4 1687.0,674.5" fill="#e8e8e8" stroke="#444" stroke-width="0.4" stroke-linejoin="round"/><polygon points="1692.3,667.7 1696.5,667.6 1696.5,674.2 1692.2,674.3" fill="#e8e8e8" stroke="#444" stroke-width="0.4" stroke-linejoin="round"/><polygon points="1697.6,667.6 1701.8,667.5 1701.7,674.1 1697.5,674.2" fill="#e8e8e8" stroke="#444" stroke-width="0.4" stroke-linejoin="round"/><polygon points="1705.2,667.4 1709.4,667.3 1709.4,673.8 1705.1,674.0" fill="#e8e8e8" stroke="#444" stroke-width="0.4" stroke-linejoin="round"/><polygon points="1710.5,667.3 1714.7,667.2 1714.6,673.7 1710.4,673.8" fill="#e8e8e8" stroke="#444" stroke-width="0.4" stroke-linejoin="round"/><polygon points="1715.8,667.2 1720.0,667.1 1719.9,673.5 1715.7,673.7" fill="#e8e8e8" stroke="#444" stroke-width="0.4" stroke-linejoin="round"/><polygon points="1721.1,667.1 1725.3,667.0 1725.2,673.4 1721.0,673.5" fill="#e8e8e8" stroke="#444" stroke-width="0.4" stroke-linejoin="round"/><polygon points="1728.7,666.9 1732.9,666.8 1732.8,673.2 1728.6,673.3" fill="#e8e8e8" stroke="#444" stroke-width="0.4" stroke-linejoin="round"/><polygon points="1734.0,666.8 1738.2,666.7 1738.1,673.0 1733.8,673.1" fill="#e8e8e8" stroke="#444" stroke-width="0.4" stroke-linejoin="round"/><polygon points="1739.3,666.7 1743.5,666.6 1743.3,672.8 1739.1,673.0" fill="#e8e8e8" stroke="#444" stroke-width="0.4" stroke-linejoin="round"/><polygon points="1744.6,666.6 1748.8,666.5 1748.6,672.7 1744.4,672.8" fill="#e8e8e8" stroke="#444" stroke-width="0.4" stroke-linejoin="round"/><polygon points="1752.2,666.4 1756.4,666.3 1756.2,672.5 1752.0,672.6" fill="#e8e8e8" stroke="#444" stroke-width="0.4" stroke-linejoin="round"/><polygon points="1757.5,666.3 1761.7,666.2 1761.5,672.3 1757.3,672.4" fill="#e8e8e8" stroke="#444" stroke-width="0.4" stroke-linejoin="round"/><polygon points="1762.8,666.2 1767.0,666.1 1766.8,672.2 1762.6,672.3" fill="#e8e8e8" stroke="#444" stroke-width="0.4" stroke-linejoin="round"/><polygon points="1768.1,666.0 1772.3,665.9 1772.1,672.0 1767.8,672.1" fill="#e8e8e8" stroke="#444" stroke-width="0.4" stroke-linejoin="round"/><polygon points="1775.7,665.9 1779.9,665.8 1779.7,671.8 1775.4,671.9" fill="#e8e8e8" stroke="#444" stroke-width="0.4" stroke-linejoin="round"/><polygon points="1781.0,665.8 1785.2,665.7 1784.9,671.6 1780.7,671.7" fill="#e8e8e8" stroke="#444" stroke-width="0.4" stroke-linejoin="round"/><polygon points="1786.3,665.6 1790.5,665.6 1790.2,671.5 1786.0,671.6" fill="#e8e8e8" stroke="#444" stroke-width="0.4" stroke-linejoin="round"/><polygon points="1791.5,665.5 1795.8,665.4 1795.5,671.3 1791.3,671.4" fill="#e8e8e8" stroke="#444" stroke-width="0.4" stroke-linejoin="round"/>
<polygon points="1681.0,636.0 1705.0,636.5 1705.0,641.0 1681.0,640.5" fill="#7a7a7a"/>
<polygon points="1596.0,673.0 1677.6,680.0 1677.0,692.0 1596.0,691.0" fill="#002a7a" stroke="#3c3c3c" stroke-width="0.6" stroke-linejoin="round"/>
<polygon points="1677.6,680.0 1797.0,676.0 1796.0,691.0 1677.0,692.0" fill="#002a7a" stroke="#3c3c3c" stroke-width="0.6" stroke-linejoin="round"/>
<line x1="1604.0" y1="676.0" x2="1604.0" y2="691.0" stroke="#222" stroke-width="0.6"/>
<line x1="1615.0" y1="676.0" x2="1615.0" y2="691.0" stroke="#222" stroke-width="0.6"/>
<line x1="1626.0" y1="676.0" x2="1626.0" y2="691.0" stroke="#222" stroke-width="0.6"/>
<line x1="1637.0" y1="676.0" x2="1637.0" y2="691.0" stroke="#222" stroke-width="0.6"/>
<line x1="1648.0" y1="676.0" x2="1648.0" y2="691.0" stroke="#222" stroke-width="0.6"/>
<line x1="1659.0" y1="676.0" x2="1659.0" y2="691.0" stroke="#222" stroke-width="0.6"/>
<line x1="1670.0" y1="676.0" x2="1670.0" y2="691.0" stroke="#222" stroke-width="0.6"/>
<line x1="1681.0" y1="676.0" x2="1681.0" y2="691.0" stroke="#222" stroke-width="0.6"/>
<line x1="1692.0" y1="676.0" x2="1692.0" y2="691.0" stroke="#222" stroke-width="0.6"/>
<line x1="1703.0" y1="676.0" x2="1703.0" y2="691.0" stroke="#222" stroke-width="0.6"/>
<line x1="1714.0" y1="676.0" x2="1714.0" y2="691.0" stroke="#222" stroke-width="0.6"/>
<line x1="1725.0" y1="676.0" x2="1725.0" y2="691.0" stroke="#222" stroke-width="0.6"/>
<line x1="1736.0" y1="676.0" x2="1736.0" y2="691.0" stroke="#222" stroke-width="0.6"/>
<line x1="1747.0" y1="676.0" x2="1747.0" y2="691.0" stroke="#222" stroke-width="0.6"/>
<line x1="1758.0" y1="676.0" x2="1758.0" y2="691.0" stroke="#222" stroke-width="0.6"/>
<line x1="1769.0" y1="676.0" x2="1769.0" y2="691.0" stroke="#222" stroke-width="0.6"/>
<line x1="1780.0" y1="676.0" x2="1780.0" y2="691.0" stroke="#222" stroke-width="0.6"/>
<line x1="1791.0" y1="676.0" x2="1791.0" y2="691.0" stroke="#222" stroke-width="0.6"/>
<polygon points="1604.5,589.0 1617.0,565.0 1800.0,576.0 1820.0,591.0" fill="#6e58b8" stroke="#3c3c3c" stroke-width="0.6" stroke-linejoin="round"/>
<line x1="1612.0" y1="575.0" x2="1808.0" y2="583.0" stroke="#8a78d0" stroke-width="0.8"/>
<line x1="1617.0" y1="566.0" x2="1800.0" y2="576.5" stroke="#b0a070" stroke-width="1.3"/>
<line x1="1640.0" y1="580.0" x2="1790.0" y2="585.0" stroke="#5a48a0" stroke-width="0.6"/>
<line x1="1606.0" y1="586.0" x2="1815.0" y2="590.0" stroke="#b0a070" stroke-width="1"/>
<polygon points="1752.0,577.0 1790.0,579.0 1795.0,588.0 1750.0,586.0" fill="#dddddd" stroke="#3c3c3c" stroke-width="0.4" stroke-linejoin="round"/>
<polygon points="1735.0,578.0 1742.0,578.0 1742.0,586.0 1735.0,586.0" fill="#ff8010"/>
<polygon points="1802.0,617.7 1863.0,618.6 1857.0,671.0 1797.0,672.6" fill="#4a4a4a" stroke="#3c3c3c" stroke-width="0.6" stroke-linejoin="round"/>
<polygon points="1802.8,618.4 1809.8,618.5 1808.6,630.8 1801.7,630.7" fill="#c4bca4"/><polygon points="1811.5,618.5 1818.5,618.6 1817.3,630.8 1810.4,630.8" fill="#c4bca4"/><polygon points="1820.2,618.6 1827.2,618.7 1826.0,630.9 1819.0,630.8" fill="#c4bca4"/><polygon points="1828.9,618.8 1835.9,618.9 1834.7,630.9 1827.7,630.9" fill="#c4bca4"/><polygon points="1837.7,618.9 1844.6,619.0 1843.3,631.0 1836.4,630.9" fill="#c4bca4"/><polygon points="1846.4,619.0 1853.3,619.1 1852.0,631.0 1845.1,631.0" fill="#c4bca4"/><polygon points="1855.1,619.1 1862.1,619.2 1860.7,631.0 1853.8,631.0" fill="#c4bca4"/><polygon points="1801.6,632.1 1808.5,632.1 1807.3,644.4 1800.4,644.5" fill="#c4bca4"/><polygon points="1810.2,632.1 1817.2,632.2 1816.0,644.4 1809.1,644.4" fill="#c4bca4"/><polygon points="1818.9,632.2 1825.9,632.2 1824.6,644.3 1817.7,644.4" fill="#c4bca4"/><polygon points="1827.6,632.2 1834.5,632.2 1833.3,644.3 1826.4,644.3" fill="#c4bca4"/><polygon points="1836.3,632.3 1843.2,632.3 1841.9,644.2 1835.0,644.3" fill="#c4bca4"/><polygon points="1844.9,632.3 1851.9,632.3 1850.6,644.2 1843.7,644.2" fill="#c4bca4"/><polygon points="1853.6,632.3 1860.6,632.4 1859.2,644.1 1852.3,644.2" fill="#c4bca4"/><polygon points="1800.3,645.8 1807.2,645.8 1806.1,658.1 1799.2,658.2" fill="#c4bca4"/><polygon points="1808.9,645.8 1815.9,645.7 1814.7,657.9 1807.8,658.0" fill="#c4bca4"/><polygon points="1817.6,645.7 1824.5,645.7 1823.3,657.8 1816.4,657.9" fill="#c4bca4"/><polygon points="1826.2,645.7 1833.1,645.6 1831.9,657.7 1825.0,657.8" fill="#c4bca4"/><polygon points="1834.9,645.6 1841.8,645.6 1840.5,657.5 1833.6,657.6" fill="#c4bca4"/><polygon points="1843.5,645.6 1850.4,645.5 1849.1,657.4 1842.2,657.5" fill="#c4bca4"/><polygon points="1852.1,645.5 1859.1,645.5 1857.7,657.3 1850.8,657.4" fill="#c4bca4"/><polygon points="1799.0,659.5 1805.9,659.4 1804.8,671.7 1797.9,671.9" fill="#c4bca4"/><polygon points="1807.7,659.4 1814.5,659.3 1813.4,671.5 1806.5,671.7" fill="#c4bca4"/><polygon points="1816.3,659.3 1823.1,659.1 1821.9,671.3 1815.1,671.4" fill="#c4bca4"/><polygon points="1824.9,659.1 1831.7,659.0 1830.5,671.0 1823.6,671.2" fill="#c4bca4"/><polygon points="1833.5,659.0 1840.4,658.9 1839.1,670.8 1832.2,671.0" fill="#c4bca4"/><polygon points="1842.1,658.8 1849.0,658.7 1847.6,670.6 1840.8,670.8" fill="#c4bca4"/><polygon points="1850.7,658.7 1857.6,658.6 1856.2,670.4 1849.4,670.5" fill="#c4bca4"/>
<polygon points="1803.0,620.3 1808.9,620.4 1808.4,625.2 1802.5,625.1" fill="#ececec"/><polygon points="1811.7,620.4 1817.6,620.5 1817.1,625.2 1811.2,625.2" fill="#ececec"/><polygon points="1820.4,620.5 1826.3,620.6 1825.8,625.3 1819.9,625.3" fill="#ececec"/><polygon points="1829.1,620.6 1835.0,620.7 1834.5,625.4 1828.6,625.4" fill="#ececec"/><polygon points="1837.8,620.8 1843.7,620.8 1843.2,625.5 1837.3,625.4" fill="#ececec"/><polygon points="1846.5,620.9 1852.4,620.9 1851.9,625.6 1846.0,625.5" fill="#ececec"/><polygon points="1855.2,621.0 1861.1,621.1 1860.6,625.7 1854.7,625.6" fill="#ececec"/><polygon points="1801.7,633.7 1807.6,633.7 1807.2,638.5 1801.3,638.5" fill="#ececec"/><polygon points="1810.4,633.7 1816.3,633.7 1815.8,638.5 1809.9,638.5" fill="#ececec"/><polygon points="1819.1,633.7 1825.0,633.7 1824.5,638.4 1818.6,638.5" fill="#ececec"/><polygon points="1827.7,633.7 1833.6,633.8 1833.1,638.4 1827.2,638.4" fill="#ececec"/><polygon points="1836.4,633.8 1842.3,633.8 1841.8,638.4 1835.9,638.4" fill="#ececec"/><polygon points="1845.1,633.8 1851.0,633.8 1850.4,638.4 1844.6,638.4" fill="#ececec"/><polygon points="1853.7,633.8 1859.6,633.8 1859.1,638.4 1853.2,638.4" fill="#ececec"/><polygon points="1800.5,647.0 1806.4,647.0 1805.9,651.8 1800.0,651.8" fill="#ececec"/><polygon points="1809.1,647.0 1815.0,646.9 1814.5,651.7 1808.6,651.7" fill="#ececec"/><polygon points="1817.7,646.9 1823.6,646.8 1823.1,651.6 1817.3,651.6" fill="#ececec"/><polygon points="1826.4,646.8 1832.2,646.8 1831.7,651.5 1825.9,651.5" fill="#ececec"/><polygon points="1835.0,646.8 1840.9,646.7 1840.4,651.4 1834.5,651.4" fill="#ececec"/><polygon points="1843.6,646.7 1849.5,646.7 1849.0,651.3 1843.1,651.3" fill="#ececec"/><polygon points="1852.3,646.6 1858.1,646.6 1857.6,651.2 1851.7,651.3" fill="#ececec"/><polygon points="1799.2,660.4 1805.1,660.3 1804.6,665.1 1798.8,665.2" fill="#ececec"/><polygon points="1807.8,660.2 1813.7,660.1 1813.2,664.9 1807.4,665.0" fill="#ececec"/><polygon points="1816.4,660.1 1822.3,660.0 1821.8,664.7 1815.9,664.8" fill="#ececec"/><polygon points="1825.0,659.9 1830.9,659.8 1830.4,664.5 1824.5,664.6" fill="#ececec"/><polygon points="1833.6,659.8 1839.5,659.7 1838.9,664.3 1833.1,664.4" fill="#ececec"/><polygon points="1842.2,659.6 1848.0,659.5 1847.5,664.1 1841.7,664.3" fill="#ececec"/><polygon points="1850.8,659.5 1856.6,659.4 1856.1,663.9 1850.3,664.1" fill="#ececec"/>
<polygon points="1797.0,672.6 1863.0,672.0 1863.0,677.0 1797.0,677.5" fill="#a8a8a8" stroke="#3c3c3c" stroke-width="0.5" stroke-linejoin="round"/>
<polygon points="1797.7,678.0 1856.0,678.0 1853.5,691.5 1797.7,691.5" fill="#e6ecee" stroke="#3c3c3c" stroke-width="0.5" stroke-linejoin="round"/>
<line x1="1805.0" y1="678.0" x2="1804.5" y2="691.5" stroke="#333" stroke-width="1.2"/>
<line x1="1822.0" y1="678.0" x2="1821.5" y2="691.5" stroke="#333" stroke-width="1.2"/>
<line x1="1838.0" y1="678.0" x2="1837.5" y2="691.5" stroke="#333" stroke-width="1.2"/>
<line x1="1850.0" y1="678.0" x2="1849.5" y2="691.5" stroke="#333" stroke-width="1.2"/>
<polygon points="1821.0,590.3 1835.5,590.3 1868.0,617.0 1801.0,617.0" fill="#b8b8b8" stroke="#3c3c3c" stroke-width="0.6" stroke-linejoin="round"/>
<polygon points="1821.0,592.0 1840.0,606.0 1840.0,614.5 1821.0,614.5" fill="#484848"/>
<polygon points="1823.0,602.0 1830.0,608.0 1823.0,608.0" fill="#d0d0d0"/>
<polygon points="1674.0,696.0 1855.0,693.0 1847.0,723.0 1676.0,724.0" fill="#cbcbcb" stroke="#3c3c3c" stroke-width="0.6" stroke-linejoin="round"/>
<line x1="1676.0" y1="716.0" x2="1850.0" y2="715.0" stroke="#777" stroke-width="0.5"/>
<polygon points="1460.0,700.0 1468.0,690.0 1582.0,702.0 1600.0,690.0 1676.0,696.0 1676.0,724.0 1659.0,721.5 1484.0,702.0" fill="#dadada" stroke="#3c3c3c" stroke-width="0.5" stroke-linejoin="round"/>
<polygon points="1505.0,701.0 1560.0,706.0 1560.0,710.0 1505.0,705.0" fill="#c4c4c4" stroke="#3c3c3c" stroke-width="0.4" stroke-linejoin="round"/>
<polygon points="1620.0,709.0 1672.0,715.0 1672.0,727.0 1620.0,721.0" fill="#9a9a9a" stroke="#3c3c3c" stroke-width="0.5" stroke-linejoin="round"/>
<polygon points="1440.0,770.0 1637.0,791.0 1640.0,808.0 1470.0,804.0 1452.0,797.0" fill="#dcdcdc" stroke="#3c3c3c" stroke-width="0.5" stroke-linejoin="round"/>
<polygon points="1543.0,778.5 1603.0,785.0 1603.0,793.0 1543.0,788.0" fill="#ababab" stroke="#3c3c3c" stroke-width="0.4" stroke-linejoin="round"/>
<polygon points="1602.0,786.0 1634.0,790.0 1640.0,808.0 1604.0,804.0" fill="#858585" stroke="#3c3c3c" stroke-width="0.5" stroke-linejoin="round"/>
<polygon points="1442.0,766.0 1637.0,787.0 1637.0,792.0 1442.0,771.0" fill="#b4b4b4" stroke="#3c3c3c" stroke-width="0.6" stroke-linejoin="round"/>
<polygon points="1442.0,766.0 1484.0,702.0 1659.0,721.5 1634.0,785.6" fill="#dedede" stroke="#3c3c3c" stroke-width="0.6" stroke-linejoin="round"/>
<polygon points="1552.0,753.0 1521.5,763.0 1509.0,774.0 1442.0,766.0 1460.0,737.0 1552.0,742.0" fill="#e2e2e2"/>
<polygon points="1509.0,764.0 1521.5,756.0 1552.0,750.0 1552.0,756.0 1543.0,788.6 1509.0,785.6" fill="#adadad" stroke="#3c3c3c" stroke-width="0.5" stroke-linejoin="round"/>
<polygon points="1509.0,764.0 1521.5,756.0 1552.0,750.0 1540.0,766.0" fill="#c8c8c8"/>
<polygon points="1582.5,738.0 1590.5,735.0 1599.5,739.5 1591.5,743.0" fill="#eeeeee" stroke="#3c3c3c" stroke-width="0.6" stroke-linejoin="round"/>
<polygon points="1623.0,728.6 1631.0,725.6 1640.0,730.1 1632.0,733.6" fill="#eeeeee" stroke="#3c3c3c" stroke-width="0.6" stroke-linejoin="round"/>
<polygon points="1606.0,752.0 1614.0,749.0 1623.0,753.5 1615.0,757.0" fill="#eeeeee" stroke="#3c3c3c" stroke-width="0.6" stroke-linejoin="round"/>
<polygon points="1650.6,743.0 1658.6,740.0 1667.6,744.5 1659.6,748.0" fill="#eeeeee" stroke="#3c3c3c" stroke-width="0.6" stroke-linejoin="round"/>
<polygon points="1516.4,720.5 1532.4,722.0 1532.4,728.5 1516.4,727.0" fill="#e4e4e4" stroke="#3c3c3c" stroke-width="0.5" stroke-linejoin="round"/>
<polygon points="1516.4,726.0 1532.4,727.5 1532.4,728.5 1516.4,727.0" fill="#a0a0a0"/>
<polygon points="1547.0,723.5 1563.0,725.0 1563.0,731.5 1547.0,730.0" fill="#e4e4e4" stroke="#3c3c3c" stroke-width="0.5" stroke-linejoin="round"/>
<polygon points="1547.0,729.0 1563.0,730.5 1563.0,731.5 1547.0,730.0" fill="#a0a0a0"/>
<polygon points="1507.0,731.7 1523.0,733.2 1523.0,738.7 1507.0,737.2" fill="#e4e4e4" stroke="#3c3c3c" stroke-width="0.5" stroke-linejoin="round"/>
<polygon points="1507.0,736.2 1523.0,737.7 1523.0,738.7 1507.0,737.2" fill="#a0a0a0"/>
<polygon points="1537.0,714.4 1543.0,715.9 1543.0,718.4 1537.0,716.9" fill="#e4e4e4" stroke="#3c3c3c" stroke-width="0.5" stroke-linejoin="round"/>
<polygon points="1537.0,715.9 1543.0,717.4 1543.0,718.4 1537.0,716.9" fill="#a0a0a0"/>
<polygon points="1491.0,728.0 1499.0,718.5 1503.0,720.0 1495.0,729.7" fill="#e4e4e4" stroke="#3c3c3c" stroke-width="0.5" stroke-linejoin="round"/>
<polygon points="1480.0,737.3 1552.0,740.8 1552.0,751.0 1480.0,744.0" fill="#bcbcbc" stroke="#3c3c3c" stroke-width="0.5" stroke-linejoin="round"/>
<polygon points="1637.4,752.0 1660.0,751.0 1682.0,760.0 1685.0,775.0 1682.0,819.0 1660.0,814.0 1640.0,790.0" fill="#cacaca" stroke="#3c3c3c" stroke-width="0.5" stroke-linejoin="round" fill-opacity="0.85"/>
<line x1="1682.0" y1="760.0" x2="1684.0" y2="822.0" stroke="#777" stroke-width="0.8"/>
<polygon points="1440.0,774.0 1450.0,775.0 1450.0,790.0 1440.0,789.0" fill="#848484" stroke="#3c3c3c" stroke-width="0.5" stroke-linejoin="round"/>
<polygon points="1460.0,776.0 1470.0,777.0 1470.0,796.0 1460.0,795.0" fill="#848484" stroke="#3c3c3c" stroke-width="0.5" stroke-linejoin="round"/>
<polygon points="1604.0,792.0 1640.0,807.5 1639.0,819.0 1630.0,827.5 1627.5,864.0 1616.0,865.0 1606.0,870.0" fill="#848484" stroke="#3c3c3c" stroke-width="0.6" stroke-linejoin="round"/>
<polygon points="1485.0,817.0 1501.0,794.0 1604.0,804.0 1640.0,807.5 1639.0,819.0 1617.5,835.0 1485.0,817.0" fill="#878787" stroke="#3c3c3c" stroke-width="0.6" stroke-linejoin="round"/>
<polygon points="1485.0,817.0 1617.5,835.0 1606.0,870.0 1506.0,855.0 1501.0,853.0 1485.0,851.0" fill="#848484" stroke="#3c3c3c" stroke-width="0.6" stroke-linejoin="round"/>
<line x1="1485.0" y1="835.0" x2="1612.0" y2="852.0" stroke="#444" stroke-width="0.5"/>
<polygon points="1503.0,806.0 1540.0,811.0 1537.0,820.0 1500.0,815.0" fill="#9a9a9a" stroke="#3c3c3c" stroke-width="0.4" stroke-linejoin="round"/>
<polygon points="1250.0,838.0 1370.0,856.0 1385.0,845.0 1431.0,785.0 1442.0,768.0 1483.0,702.0 1468.0,692.0 1345.0,826.0 1304.0,826.0" fill="#f2f2f2" stroke="#3c3c3c" stroke-width="0.6" stroke-linejoin="round"/>
<line x1="1330.0" y1="850.0" x2="1460.0" y2="695.0" stroke="#666" stroke-width="0.4"/>
<polygon points="1370.0,860.0 1432.0,786.0 1452.0,789.0 1453.0,808.0 1446.0,808.0 1446.0,840.0 1421.0,867.0 1410.0,866.0 1386.0,845.0" fill="#858585" stroke="#3c3c3c" stroke-width="0.6" stroke-linejoin="round"/>
<polygon points="1386.0,845.0 1420.0,804.0 1446.0,807.5 1421.0,840.0" fill="#a0a0a0" stroke="#3c3c3c" stroke-width="0.5" stroke-linejoin="round"/>
<polygon points="1412.0,838.0 1423.0,826.0 1423.0,836.0 1418.0,842.0" fill="#a8c0dc"/>
<polygon points="1454.0,807.0 1465.0,808.0 1465.0,823.0 1454.0,822.0" fill="#858585" stroke="#3c3c3c" stroke-width="0.5" stroke-linejoin="round"/>
<polygon points="1612.0,865.0 1910.0,890.0 1910.0,907.5 1745.0,884.0 1606.0,882.5" fill="#858585" stroke="#3c3c3c" stroke-width="0.6" stroke-linejoin="round"/>
<line x1="1616.0" y1="866.0" x2="1910.0" y2="890.0" stroke="#c4c4c4" stroke-width="0.9"/>
<polygon points="1670.0,856.0 1691.0,859.0 1690.0,875.0 1670.0,872.5" fill="#878787" stroke="#3c3c3c" stroke-width="0.5" stroke-linejoin="round"/>
<polygon points="1696.0,834.4 1760.6,839.4 1757.5,868.0 1692.0,856.0" fill="#858585" stroke="#3c3c3c" stroke-width="0.6" stroke-linejoin="round"/>
<polygon points="1692.0,856.0 1757.5,868.0 1750.0,880.0 1715.0,878.0 1690.0,876.0" fill="#848484" stroke="#3c3c3c" stroke-width="0.5" stroke-linejoin="round"/>
<line x1="1714.0" y1="842.0" x2="1712.0" y2="880.0" stroke="#555" stroke-width="1.2"/>
<line x1="1729.0" y1="845.0" x2="1727.0" y2="880.0" stroke="#555" stroke-width="1.2"/>
<line x1="1898.0" y1="862.0" x2="2024.0" y2="871.0" stroke="#bdbdbd" stroke-width="0.9"/>
<line x1="2024.0" y1="871.0" x2="2080.0" y2="930.0" stroke="#c0c0c0" stroke-width="1.1"/>
<polygon points="1899.4,862.5 2023.4,871.0 2079.3,929.9 2080.6,956.7 1897.0,927.5 1900.7,909.3 1898.2,906.2 1895.8,869.2" fill="#858585" stroke="#3c3c3c" stroke-width="0.5" stroke-linejoin="round"/>
<polygon points="1989.4,871.0 2023.4,871.0 2079.3,929.9 2047.7,900.8 2017.4,897.1" fill="#959595" stroke="#3c3c3c" stroke-width="0.5" stroke-linejoin="round"/>
<polygon points="1900.7,909.3 1932.3,912.9 1937.1,933.6 1898.2,927.5" fill="#878787" stroke="#3c3c3c" stroke-width="0.5" stroke-linejoin="round"/>
<polygon points="1932.3,912.9 1963.9,916.6 1963.9,937.2 1937.1,933.6" fill="#848484" stroke="#3c3c3c" stroke-width="0.5" stroke-linejoin="round"/>
<polygon points="1974.8,922.7 2027.1,927.5 2025.9,947.0 1972.4,939.7" fill="#858585" stroke="#3c3c3c" stroke-width="0.5" stroke-linejoin="round"/>
<polygon points="1974.8,900.8 2047.7,900.8 2030.7,922.7 2007.6,923.9" fill="#929292" stroke="#3c3c3c" stroke-width="0.5" stroke-linejoin="round"/>
<polygon points="1928.6,887.4 1971.2,893.5 1969.9,903.2 1929.8,897.1" fill="#8f8f8f" stroke="#3c3c3c" stroke-width="0.5" stroke-linejoin="round"/>
<polygon points="1939.6,877.7 1972.4,881.3 1971.2,893.5 1938.3,887.4" fill="#888888" stroke="#3c3c3c" stroke-width="0.5" stroke-linejoin="round"/>
<polygon points="2021.0,895.9 2028.3,898.3 2023.4,922.7 2017.4,920.2" fill="#848484" stroke="#3c3c3c" stroke-width="0.5" stroke-linejoin="round"/>
<polygon points="1960.2,895.9 1973.6,895.9 1969.9,937.2 1963.9,937.2" fill="#9a9a9a" stroke="#3c3c3c" stroke-width="0.5" stroke-linejoin="round"/>
<line x1="1962.7" y1="870.4" x2="1984.5" y2="894.7" stroke="#b8b8b8" stroke-width="0.9"/>
<line x1="1989.4" y1="871.6" x2="2008.8" y2="894.7" stroke="#b8b8b8" stroke-width="0.9"/>
<line x1="2067.2" y1="929.9" x2="2083.0" y2="956.7" stroke="#b8b8b8" stroke-width="0.9"/>
<line x1="2028.3" y1="929.9" x2="2038.0" y2="949.4" stroke="#b8b8b8" stroke-width="0.9"/>
<line x1="1921.3" y1="875.2" x2="1926.2" y2="910.5" stroke="#b8b8b8" stroke-width="0.9"/>
<line x1="2036.8" y1="926.3" x2="2050.2" y2="949.4" stroke="#b8b8b8" stroke-width="0.9"/>
<line x1="1895.8" y1="869.2" x2="1892.2" y2="893.5" stroke="#aaaaaa" stroke-width="1.2"/>
<polygon points="2017.4,897.1 2019.8,899.6 2017.4,900.8" fill="#cfe0ee" stroke="#3c3c3c" stroke-width="0" stroke-linejoin="round"/>
<polygon points="2017.4,919.0 2019.8,920.2 2017.4,921.4" fill="#cfe0ee" stroke="#3c3c3c" stroke-width="0" stroke-linejoin="round"/>
<polygon points="1606.0,882.5 2086.6,956.6 2074.0,1001.6 1603.8,921.2" fill="#858585" stroke="#3c3c3c" stroke-width="0.6" stroke-linejoin="round"/>
<line x1="1606.0" y1="883.5" x2="2086.0" y2="957.5" stroke="#c4c4c4" stroke-width="1.0"/>
<line x1="1604.0" y1="905.0" x2="2078.7" y2="984.0" stroke="#555" stroke-width="0.5"/>
<line x1="1784.0" y1="852.5" x2="1780.0" y2="907.5" stroke="#9a9a9a" stroke-width="1.8"/>
<line x1="1841.0" y1="860.6" x2="1836.0" y2="916.0" stroke="#9a9a9a" stroke-width="1.8"/>
<polygon points="1360.0,857.5 1598.0,895.0 1597.5,921.0 1360.0,882.0" fill="#858585" stroke="#3c3c3c" stroke-width="0.6" stroke-linejoin="round"/>
<line x1="1370.0" y1="861.0" x2="1598.0" y2="896.0" stroke="#c0c0c0" stroke-width="0.9"/>
<line x1="1370.0" y1="860.0" x2="1370.0" y2="884.0" stroke="#555" stroke-width="0.5"/>
<polygon points="1598.0,896.0 1615.0,857.5 1606.0,882.5 1603.8,921.2 1597.5,921.0" fill="#9a9a9a" stroke="#3c3c3c" stroke-width="0.5" stroke-linejoin="round"/>
<polygon points="1337.5,795.0 1456.0,672.5 1468.0,690.0 1345.0,826.0" fill="#e6e6e6" stroke="#3c3c3c" stroke-width="0.5" stroke-linejoin="round"/>
<polygon points="1361.2,790.9 1368.8,782.0 1370.6,797.3 1362.8,806.8" fill="#c8dce0"/><polygon points="1370.7,779.8 1378.3,770.9 1380.4,785.4 1372.5,794.9" fill="#c8dce0"/><polygon points="1380.2,768.7 1387.8,759.8 1390.1,773.5 1382.3,783.0" fill="#c8dce0"/><polygon points="1389.7,757.6 1397.4,748.7 1399.9,761.6 1392.1,771.1" fill="#c8dce0"/><polygon points="1399.3,746.5 1406.9,737.6 1409.7,749.7 1401.9,759.2" fill="#c8dce0"/><polygon points="1408.8,735.4 1416.4,726.5 1419.4,737.8 1411.6,747.3" fill="#c8dce0"/><polygon points="1418.3,724.3 1426.0,715.4 1429.2,725.9 1421.4,735.4" fill="#c8dce0"/><polygon points="1427.9,713.2 1435.5,704.3 1439.0,714.0 1431.2,723.5" fill="#c8dce0"/><polygon points="1437.4,702.1 1445.0,693.2 1448.8,702.1 1440.9,711.6" fill="#c8dce0"/><polygon points="1446.9,691.0 1454.5,682.1 1458.5,690.2 1450.7,699.7" fill="#c8dce0"/>
<line x1="1340.0" y1="797.0" x2="1341.5" y2="828.0" stroke="#333" stroke-width="2.4"/>
<line x1="1355.2" y1="781.9" x2="1356.8" y2="811.2" stroke="#333" stroke-width="2.4"/>
<line x1="1370.5" y1="766.8" x2="1372.0" y2="794.5" stroke="#333" stroke-width="2.4"/>
<line x1="1385.8" y1="751.6" x2="1387.2" y2="777.8" stroke="#333" stroke-width="2.4"/>
<line x1="1401.0" y1="736.5" x2="1402.5" y2="761.0" stroke="#333" stroke-width="2.4"/>
<line x1="1416.2" y1="721.4" x2="1417.8" y2="744.2" stroke="#333" stroke-width="2.4"/>
<line x1="1431.5" y1="706.2" x2="1433.0" y2="727.5" stroke="#333" stroke-width="2.4"/>
<line x1="1446.8" y1="691.1" x2="1448.2" y2="710.8" stroke="#333" stroke-width="2.4"/>
<line x1="1462.0" y1="676.0" x2="1463.5" y2="694.0" stroke="#333" stroke-width="2.4"/>
<polygon points="1335.0,709.0 1469.0,597.0 1470.0,652.0 1337.5,755.0" fill="#747474" stroke="#3c3c3c" stroke-width="0.6" stroke-linejoin="round"/>
<polygon points="1339.2,716.2 1345.0,711.2 1345.3,720.9 1339.4,725.8" fill="#484848"/><polygon points="1347.3,709.2 1353.1,704.2 1353.4,714.1 1347.6,719.0" fill="#484848"/><polygon points="1355.4,702.3 1361.3,697.2 1361.5,707.3 1355.7,712.2" fill="#484848"/><polygon points="1363.5,695.3 1369.4,690.3 1369.7,700.5 1363.8,705.4" fill="#484848"/><polygon points="1371.7,688.3 1377.5,683.3 1377.8,693.7 1371.9,698.6" fill="#484848"/><polygon points="1379.8,681.3 1385.6,676.3 1385.9,686.9 1380.1,691.8" fill="#484848"/><polygon points="1387.9,674.3 1393.8,669.3 1394.0,680.1 1388.2,685.0" fill="#484848"/><polygon points="1396.0,667.4 1401.9,662.3 1402.2,673.3 1396.3,678.2" fill="#484848"/><polygon points="1404.2,660.4 1410.0,655.4 1410.3,666.4 1404.4,671.3" fill="#484848"/><polygon points="1412.3,653.4 1418.1,648.4 1418.4,659.6 1412.6,664.5" fill="#484848"/><polygon points="1420.4,646.4 1426.3,641.4 1426.5,652.8 1420.7,657.7" fill="#484848"/><polygon points="1428.5,639.5 1434.4,634.4 1434.7,646.0 1428.8,650.9" fill="#484848"/><polygon points="1436.7,632.5 1442.5,627.4 1442.8,639.2 1436.9,644.1" fill="#484848"/><polygon points="1444.8,625.5 1450.6,620.5 1450.9,632.4 1445.1,637.3" fill="#484848"/><polygon points="1452.9,618.5 1458.8,613.5 1459.0,625.6 1453.2,630.5" fill="#484848"/><polygon points="1461.0,611.5 1466.9,606.5 1467.2,618.8 1461.3,623.7" fill="#484848"/><polygon points="1339.5,728.3 1345.4,723.4 1345.6,733.1 1339.8,737.9" fill="#484848"/><polygon points="1347.6,721.5 1353.5,716.6 1353.7,726.5 1347.9,731.3" fill="#484848"/><polygon points="1355.8,714.7 1361.6,709.8 1361.9,719.9 1356.0,724.7" fill="#484848"/><polygon points="1363.9,707.9 1369.7,703.1 1370.0,713.3 1364.1,718.1" fill="#484848"/><polygon points="1372.0,701.2 1377.9,696.3 1378.1,706.7 1372.3,711.5" fill="#484848"/><polygon points="1380.1,694.4 1386.0,689.5 1386.2,700.1 1380.4,704.9" fill="#484848"/><polygon points="1388.3,687.6 1394.1,682.8 1394.4,693.5 1388.5,698.3" fill="#484848"/><polygon points="1396.4,680.9 1402.2,676.0 1402.5,686.9 1396.6,691.6" fill="#484848"/><polygon points="1404.5,674.1 1410.4,669.2 1410.6,680.3 1404.8,685.0" fill="#484848"/><polygon points="1412.6,667.3 1418.5,662.4 1418.7,673.7 1412.9,678.4" fill="#484848"/><polygon points="1420.8,660.5 1426.6,655.7 1426.9,667.1 1421.0,671.8" fill="#484848"/><polygon points="1428.9,653.8 1434.7,648.9 1435.0,660.5 1429.1,665.2" fill="#484848"/><polygon points="1437.0,647.0 1442.9,642.1 1443.1,653.9 1437.3,658.6" fill="#484848"/><polygon points="1445.1,640.2 1451.0,635.4 1451.2,647.3 1445.4,652.0" fill="#484848"/><polygon points="1453.3,633.5 1459.1,628.6 1459.4,640.7 1453.5,645.4" fill="#484848"/><polygon points="1461.4,626.7 1467.2,621.8 1467.5,634.1 1461.6,638.8" fill="#484848"/><polygon points="1339.8,740.3 1345.7,735.6 1346.0,745.3 1340.1,749.9" fill="#484848"/><polygon points="1348.0,733.7 1353.8,729.0 1354.1,738.9 1348.2,743.5" fill="#484848"/><polygon points="1356.1,727.2 1361.9,722.4 1362.2,732.5 1356.4,737.1" fill="#484848"/><polygon points="1364.2,720.6 1370.1,715.9 1370.3,726.1 1364.5,730.7" fill="#484848"/><polygon points="1372.3,714.0 1378.2,709.3 1378.5,719.7 1372.6,724.3" fill="#484848"/><polygon points="1380.5,707.5 1386.3,702.7 1386.6,713.3 1380.7,717.9" fill="#484848"/><polygon points="1388.6,700.9 1394.4,696.2 1394.7,706.9 1388.9,711.5" fill="#484848"/><polygon points="1396.7,694.3 1402.6,689.6 1402.8,700.5 1397.0,705.1" fill="#484848"/><polygon points="1404.8,687.8 1410.7,683.1 1411.0,694.1 1405.1,698.7" fill="#484848"/><polygon points="1413.0,681.2 1418.8,676.5 1419.1,687.7 1413.2,692.3" fill="#484848"/><polygon points="1421.1,674.7 1426.9,669.9 1427.2,681.3 1421.4,685.9" fill="#484848"/><polygon points="1429.2,668.1 1435.1,663.4 1435.3,674.9 1429.5,679.6" fill="#484848"/><polygon points="1437.3,661.5 1443.2,656.8 1443.5,668.5 1437.6,673.2" fill="#484848"/><polygon points="1445.5,655.0 1451.3,650.2 1451.6,662.2 1445.7,666.8" fill="#484848"/><polygon points="1453.6,648.4 1459.4,643.7 1459.7,655.8 1453.9,660.4" fill="#484848"/><polygon points="1461.7,641.8 1467.6,637.1 1467.8,649.4 1462.0,654.0" fill="#484848"/>
<polygon points="1340.2,716.3 1344.1,713.0 1344.3,720.8 1340.4,724.1" fill="#e4e4e4"/><polygon points="1348.3,709.4 1352.2,706.0 1352.4,714.0 1348.5,717.2" fill="#e4e4e4"/><polygon points="1356.4,702.4 1360.3,699.1 1360.5,707.1 1356.6,710.4" fill="#e4e4e4"/><polygon points="1364.5,695.5 1368.4,692.1 1368.7,700.3 1364.8,703.6" fill="#e4e4e4"/><polygon points="1372.7,688.5 1376.6,685.2 1376.8,693.5 1372.9,696.7" fill="#e4e4e4"/><polygon points="1380.8,681.5 1384.7,678.2 1384.9,686.6 1381.0,689.9" fill="#e4e4e4"/><polygon points="1388.9,674.6 1392.8,671.2 1393.0,679.8 1389.1,683.1" fill="#e4e4e4"/><polygon points="1397.0,667.6 1400.9,664.3 1401.2,673.0 1397.3,676.3" fill="#e4e4e4"/><polygon points="1405.2,660.6 1409.1,657.3 1409.3,666.2 1405.4,669.4" fill="#e4e4e4"/><polygon points="1413.3,653.7 1417.2,650.3 1417.4,659.3 1413.5,662.6" fill="#e4e4e4"/><polygon points="1421.4,646.7 1425.3,643.4 1425.5,652.5 1421.6,655.8" fill="#e4e4e4"/><polygon points="1429.5,639.8 1433.4,636.4 1433.7,645.7 1429.8,648.9" fill="#e4e4e4"/><polygon points="1437.7,632.8 1441.6,629.5 1441.8,638.8 1437.9,642.1" fill="#e4e4e4"/><polygon points="1445.8,625.8 1449.7,622.5 1449.9,632.0 1446.0,635.3" fill="#e4e4e4"/><polygon points="1453.9,618.9 1457.8,615.5 1458.0,625.2 1454.1,628.5" fill="#e4e4e4"/><polygon points="1462.0,611.9 1465.9,608.6 1466.2,618.3 1462.3,621.6" fill="#e4e4e4"/><polygon points="1340.5,728.4 1344.4,725.2 1344.6,732.9 1340.7,736.1" fill="#e4e4e4"/><polygon points="1348.6,721.6 1352.5,718.4 1352.7,726.3 1348.8,729.5" fill="#e4e4e4"/><polygon points="1356.8,714.9 1360.7,711.7 1360.9,719.7 1357.0,722.9" fill="#e4e4e4"/><polygon points="1364.9,708.1 1368.8,704.9 1369.0,713.1 1365.1,716.3" fill="#e4e4e4"/><polygon points="1373.0,701.4 1376.9,698.1 1377.1,706.5 1373.2,709.6" fill="#e4e4e4"/><polygon points="1381.1,694.6 1385.0,691.4 1385.2,699.8 1381.3,703.0" fill="#e4e4e4"/><polygon points="1389.3,687.9 1393.2,684.6 1393.4,693.2 1389.5,696.4" fill="#e4e4e4"/><polygon points="1397.4,681.1 1401.3,677.9 1401.5,686.6 1397.6,689.8" fill="#e4e4e4"/><polygon points="1405.5,674.4 1409.4,671.1 1409.6,680.0 1405.7,683.2" fill="#e4e4e4"/><polygon points="1413.6,667.6 1417.5,664.4 1417.7,673.4 1413.8,676.5" fill="#e4e4e4"/><polygon points="1421.8,660.9 1425.7,657.6 1425.9,666.7 1422.0,669.9" fill="#e4e4e4"/><polygon points="1429.9,654.1 1433.8,650.9 1434.0,660.1 1430.1,663.3" fill="#e4e4e4"/><polygon points="1438.0,647.4 1441.9,644.1 1442.1,653.5 1438.2,656.7" fill="#e4e4e4"/><polygon points="1446.1,640.6 1450.0,637.4 1450.2,646.9 1446.3,650.0" fill="#e4e4e4"/><polygon points="1454.3,633.8 1458.2,630.6 1458.4,640.2 1454.5,643.4" fill="#e4e4e4"/><polygon points="1462.4,627.1 1466.3,623.8 1466.5,633.6 1462.6,636.8" fill="#e4e4e4"/><polygon points="1340.8,740.5 1344.7,737.3 1345.0,745.1 1341.1,748.2" fill="#e4e4e4"/><polygon points="1349.0,733.9 1352.9,730.8 1353.1,738.7 1349.2,741.8" fill="#e4e4e4"/><polygon points="1357.1,727.4 1361.0,724.2 1361.2,732.3 1357.3,735.3" fill="#e4e4e4"/><polygon points="1365.2,720.8 1369.1,717.7 1369.3,725.9 1365.4,728.9" fill="#e4e4e4"/><polygon points="1373.3,714.3 1377.2,711.1 1377.5,719.4 1373.6,722.5" fill="#e4e4e4"/><polygon points="1381.5,707.7 1385.4,704.6 1385.6,713.0 1381.7,716.1" fill="#e4e4e4"/><polygon points="1389.6,701.2 1393.5,698.0 1393.7,706.6 1389.8,709.7" fill="#e4e4e4"/><polygon points="1397.7,694.6 1401.6,691.5 1401.8,700.2 1397.9,703.3" fill="#e4e4e4"/><polygon points="1405.8,688.1 1409.7,684.9 1410.0,693.8 1406.1,696.9" fill="#e4e4e4"/><polygon points="1414.0,681.5 1417.9,678.4 1418.1,687.4 1414.2,690.5" fill="#e4e4e4"/><polygon points="1422.1,675.0 1426.0,671.9 1426.2,681.0 1422.3,684.0" fill="#e4e4e4"/><polygon points="1430.2,668.5 1434.1,665.3 1434.3,674.6 1430.4,677.6" fill="#e4e4e4"/><polygon points="1438.3,661.9 1442.2,658.8 1442.5,668.1 1438.6,671.2" fill="#e4e4e4"/><polygon points="1446.5,655.4 1450.4,652.2 1450.6,661.7 1446.7,664.8" fill="#e4e4e4"/><polygon points="1454.6,648.8 1458.5,645.7 1458.7,655.3 1454.8,658.4" fill="#e4e4e4"/><polygon points="1462.7,642.3 1466.6,639.1 1466.8,648.9 1462.9,652.0" fill="#e4e4e4"/>
<polygon points="1337.5,755.0 1470.0,652.0 1458.0,672.5 1337.5,795.0" fill="#746663" stroke="#3c3c3c" stroke-width="0.6" stroke-linejoin="round"/>
<polygon points="1342.8,760.3 1346.0,757.4 1346.0,764.9 1342.8,767.9" fill="#ececec" stroke="#333" stroke-width="0.5" stroke-linejoin="round"/><polygon points="1351.7,752.3 1354.9,749.4 1354.9,756.5 1351.7,759.5" fill="#ececec" stroke="#333" stroke-width="0.5" stroke-linejoin="round"/><polygon points="1360.5,744.2 1363.7,741.3 1363.7,748.2 1360.5,751.2" fill="#ececec" stroke="#333" stroke-width="0.5" stroke-linejoin="round"/><polygon points="1369.4,736.2 1372.6,733.3 1372.6,739.8 1369.4,742.8" fill="#ececec" stroke="#333" stroke-width="0.5" stroke-linejoin="round"/><polygon points="1378.2,728.1 1381.4,725.2 1381.4,731.4 1378.2,734.4" fill="#ececec" stroke="#333" stroke-width="0.5" stroke-linejoin="round"/><polygon points="1387.1,720.1 1390.2,717.2 1390.2,723.0 1387.1,726.1" fill="#ececec" stroke="#333" stroke-width="0.5" stroke-linejoin="round"/><polygon points="1395.9,712.0 1399.1,709.1 1399.1,714.7 1395.9,717.7" fill="#ececec" stroke="#333" stroke-width="0.5" stroke-linejoin="round"/><polygon points="1404.8,704.0 1407.9,701.1 1407.9,706.3 1404.8,709.3" fill="#ececec" stroke="#333" stroke-width="0.5" stroke-linejoin="round"/><polygon points="1413.6,695.9 1416.8,693.0 1416.8,697.9 1413.6,700.9" fill="#ececec" stroke="#333" stroke-width="0.5" stroke-linejoin="round"/><polygon points="1422.4,687.9 1425.6,685.0 1425.6,689.6 1422.4,692.6" fill="#ececec" stroke="#333" stroke-width="0.5" stroke-linejoin="round"/><polygon points="1431.3,679.8 1434.5,676.9 1434.5,681.2 1431.3,684.2" fill="#ececec" stroke="#333" stroke-width="0.5" stroke-linejoin="round"/><polygon points="1440.1,671.8 1443.3,668.9 1443.3,672.8 1440.1,675.8" fill="#ececec" stroke="#333" stroke-width="0.5" stroke-linejoin="round"/><polygon points="1449.0,663.7 1452.2,660.8 1452.2,664.4 1449.0,667.5" fill="#ececec" stroke="#333" stroke-width="0.5" stroke-linejoin="round"/><polygon points="1342.8,777.6 1346.0,774.4 1346.0,781.9 1342.8,785.2" fill="#ececec" stroke="#333" stroke-width="0.5" stroke-linejoin="round"/><polygon points="1351.7,768.8 1354.9,765.6 1354.9,772.8 1351.7,776.1" fill="#ececec" stroke="#333" stroke-width="0.5" stroke-linejoin="round"/><polygon points="1360.5,760.0 1363.7,756.9 1363.7,763.7 1360.5,767.0" fill="#ececec" stroke="#333" stroke-width="0.5" stroke-linejoin="round"/><polygon points="1369.4,751.2 1372.6,748.1 1372.6,754.6 1369.4,757.9" fill="#ececec" stroke="#333" stroke-width="0.5" stroke-linejoin="round"/><polygon points="1378.2,742.5 1381.4,739.3 1381.4,745.5 1378.2,748.8" fill="#ececec" stroke="#333" stroke-width="0.5" stroke-linejoin="round"/><polygon points="1387.1,733.7 1390.2,730.5 1390.2,736.4 1387.1,739.7" fill="#ececec" stroke="#333" stroke-width="0.5" stroke-linejoin="round"/><polygon points="1395.9,724.9 1399.1,721.7 1399.1,727.3 1395.9,730.6" fill="#ececec" stroke="#333" stroke-width="0.5" stroke-linejoin="round"/><polygon points="1404.8,716.1 1407.9,713.0 1407.9,718.2 1404.8,721.5" fill="#ececec" stroke="#333" stroke-width="0.5" stroke-linejoin="round"/><polygon points="1413.6,707.3 1416.8,704.2 1416.8,709.1 1413.6,712.4" fill="#ececec" stroke="#333" stroke-width="0.5" stroke-linejoin="round"/><polygon points="1422.4,698.6 1425.6,695.4 1425.6,700.0 1422.4,703.3" fill="#ececec" stroke="#333" stroke-width="0.5" stroke-linejoin="round"/><polygon points="1431.3,689.8 1434.5,686.6 1434.5,690.9 1431.3,694.2" fill="#ececec" stroke="#333" stroke-width="0.5" stroke-linejoin="round"/><polygon points="1440.1,681.0 1443.3,677.8 1443.3,681.8 1440.1,685.1" fill="#ececec" stroke="#333" stroke-width="0.5" stroke-linejoin="round"/><polygon points="1449.0,672.2 1452.2,669.1 1452.2,672.7 1449.0,676.0" fill="#ececec" stroke="#333" stroke-width="0.5" stroke-linejoin="round"/>
<polygon points="1282.5,707.5 1335.0,715.0 1337.0,755.0 1297.0,750.0" fill="#8e8e8e" stroke="#3c3c3c" stroke-width="0.6" stroke-linejoin="round"/>
<polygon points="1289.8,715.7 1294.6,716.3 1298.1,727.4 1293.7,726.8" fill="#eeeeee" stroke="#333" stroke-width="0.5" stroke-linejoin="round"/><polygon points="1301.8,717.4 1306.6,718.0 1309.2,729.0 1304.8,728.4" fill="#eeeeee" stroke="#333" stroke-width="0.5" stroke-linejoin="round"/><polygon points="1313.8,719.1 1318.6,719.8 1320.4,730.5 1315.9,729.9" fill="#eeeeee" stroke="#333" stroke-width="0.5" stroke-linejoin="round"/><polygon points="1325.8,720.8 1330.6,721.5 1331.5,732.1 1327.0,731.4" fill="#eeeeee" stroke="#333" stroke-width="0.5" stroke-linejoin="round"/><polygon points="1295.9,733.1 1300.1,733.7 1303.7,744.8 1299.8,744.2" fill="#eeeeee" stroke="#333" stroke-width="0.5" stroke-linejoin="round"/><polygon points="1306.5,734.5 1310.7,735.1 1313.4,746.1 1309.5,745.5" fill="#eeeeee" stroke="#333" stroke-width="0.5" stroke-linejoin="round"/><polygon points="1317.1,736.0 1321.4,736.6 1323.1,747.3 1319.2,746.8" fill="#eeeeee" stroke="#333" stroke-width="0.5" stroke-linejoin="round"/><polygon points="1327.7,737.5 1332.0,738.0 1332.9,748.6 1329.0,748.1" fill="#eeeeee" stroke="#333" stroke-width="0.5" stroke-linejoin="round"/>
<polygon points="1297.0,750.0 1337.0,755.0 1337.0,796.0 1300.0,792.5" fill="#746663" stroke="#3c3c3c" stroke-width="0.6" stroke-linejoin="round"/>
<polygon points="1304.7,757.4 1313.7,758.6 1314.0,768.0 1305.2,766.8" fill="#f0f0f0" stroke="#333" stroke-width="0.5" stroke-linejoin="round"/><polygon points="1322.6,759.8 1331.5,761.0 1331.6,770.3 1322.8,769.1" fill="#f0f0f0" stroke="#333" stroke-width="0.5" stroke-linejoin="round"/><polygon points="1305.6,776.3 1314.3,777.4 1314.6,786.8 1306.0,785.8" fill="#f0f0f0" stroke="#333" stroke-width="0.5" stroke-linejoin="round"/><polygon points="1323.0,778.5 1331.7,779.6 1331.7,788.9 1323.2,787.8" fill="#f0f0f0" stroke="#333" stroke-width="0.5" stroke-linejoin="round"/>
<polygon points="1300.0,792.5 1337.0,796.0 1340.0,826.0 1320.0,828.0 1304.0,826.0" fill="#dbe6ea" stroke="#3c3c3c" stroke-width="0.6" stroke-linejoin="round"/>
<line x1="1302.0" y1="793.0" x2="1303.0" y2="827.0" stroke="#444" stroke-width="0.7"/>
<line x1="1309.0" y1="793.6" x2="1310.0" y2="827.0" stroke="#444" stroke-width="0.7"/>
<line x1="1316.0" y1="794.2" x2="1317.0" y2="827.0" stroke="#444" stroke-width="0.7"/>
<line x1="1323.0" y1="794.8" x2="1324.0" y2="827.0" stroke="#444" stroke-width="0.7"/>
<line x1="1330.0" y1="795.4" x2="1331.0" y2="827.0" stroke="#444" stroke-width="0.7"/>
<line x1="1337.0" y1="796.0" x2="1338.0" y2="827.0" stroke="#444" stroke-width="0.7"/>
<line x1="1301.0" y1="800.0" x2="1339.0" y2="803.0" stroke="#555" stroke-width="0.5"/>
<line x1="1301.0" y1="810.0" x2="1339.0" y2="813.0" stroke="#555" stroke-width="0.5"/>
<line x1="1301.0" y1="818.0" x2="1339.0" y2="821.0" stroke="#555" stroke-width="0.5"/>
<polygon points="1278.0,752.0 1290.0,753.0 1290.0,758.0 1278.0,757.0" fill="#7a7a7a" stroke="#3c3c3c" stroke-width="0.5" stroke-linejoin="round"/>
<polygon points="1278.0,771.0 1290.0,772.0 1290.0,777.0 1278.0,776.0" fill="#7a7a7a" stroke="#3c3c3c" stroke-width="0.5" stroke-linejoin="round"/>
<polygon points="1278.0,789.0 1290.0,790.0 1290.0,795.0 1278.0,794.0" fill="#7a7a7a" stroke="#3c3c3c" stroke-width="0.5" stroke-linejoin="round"/>
<polygon points="1279.0,693.0 1310.0,671.0 1400.0,609.0 1440.0,584.0 1465.0,570.0 1478.0,562.0 1469.0,591.0 1450.0,590.0 1429.0,597.0 1337.0,666.0 1285.0,701.0" fill="#6e6e6e" stroke="#3c3c3c" stroke-width="0.6" stroke-linejoin="round"/>
<polygon points="1322.0,667.0 1324.5,665.3 1324.5,669.3 1322.0,671.0" fill="#e0e0e0"/>
<polygon points="1327.8,663.1 1330.3,661.4 1330.3,665.4 1327.8,667.1" fill="#e0e0e0"/>
<polygon points="1333.6,659.1 1336.1,657.4 1336.1,661.4 1333.6,663.1" fill="#e0e0e0"/>
<polygon points="1339.3,655.2 1341.8,653.5 1341.8,657.5 1339.3,659.2" fill="#e0e0e0"/>
<polygon points="1345.1,651.2 1347.6,649.5 1347.6,653.5 1345.1,655.2" fill="#e0e0e0"/>
<polygon points="1350.9,647.3 1353.4,645.6 1353.4,649.6 1350.9,651.3" fill="#e0e0e0"/>
<polygon points="1356.7,643.3 1359.2,641.6 1359.2,645.6 1356.7,647.3" fill="#e0e0e0"/>
<polygon points="1362.4,639.4 1364.9,637.7 1364.9,641.7 1362.4,643.4" fill="#e0e0e0"/>
<polygon points="1368.2,635.4 1370.7,633.7 1370.7,637.7 1368.2,639.4" fill="#e0e0e0"/>
<polygon points="1374.0,631.5 1376.5,629.8 1376.5,633.8 1374.0,635.5" fill="#e0e0e0"/>
<polygon points="1379.8,627.6 1382.3,625.9 1382.3,629.9 1379.8,631.6" fill="#e0e0e0"/>
<polygon points="1385.6,623.6 1388.1,621.9 1388.1,625.9 1385.6,627.6" fill="#e0e0e0"/>
<polygon points="1391.3,619.7 1393.8,618.0 1393.8,622.0 1391.3,623.7" fill="#e0e0e0"/>
<polygon points="1397.1,615.7 1399.6,614.0 1399.6,618.0 1397.1,619.7" fill="#e0e0e0"/>
<polygon points="1402.9,611.8 1405.4,610.1 1405.4,614.1 1402.9,615.8" fill="#e0e0e0"/>
<polygon points="1408.7,607.8 1411.2,606.1 1411.2,610.1 1408.7,611.8" fill="#e0e0e0"/>
<polygon points="1414.4,603.9 1416.9,602.2 1416.9,606.2 1414.4,607.9" fill="#e0e0e0"/>
<polygon points="1420.2,599.9 1422.7,598.2 1422.7,602.2 1420.2,603.9" fill="#e0e0e0"/>
<polygon points="1282.0,704.0 1285.0,701.0 1337.0,666.0 1429.0,597.0 1450.0,590.0 1469.0,591.0 1469.0,597.0 1335.0,709.0" fill="#4a4a4a" stroke="#3c3c3c" stroke-width="0.6" stroke-linejoin="round"/>
<polygon points="1285.0,701.0 1337.0,666.0 1429.0,597.0 1450.0,590.0 1469.0,591.0 1467.0,596.0 1335.0,707.0" fill="#ffff33" stroke="#3c3c3c" stroke-width="0.5" stroke-linejoin="round"/>
<line x1="1297.0" y1="692.3" x2="1345.4" y2="698.2" stroke="#3a3a3a" stroke-width="0.7"/>
<line x1="1309.0" y1="683.7" x2="1355.8" y2="689.5" stroke="#3a3a3a" stroke-width="0.7"/>
<line x1="1321.0" y1="675.0" x2="1366.2" y2="680.8" stroke="#3a3a3a" stroke-width="0.7"/>
<line x1="1333.0" y1="666.3" x2="1376.7" y2="672.0" stroke="#3a3a3a" stroke-width="0.7"/>
<line x1="1345.0" y1="657.7" x2="1387.1" y2="663.2" stroke="#3a3a3a" stroke-width="0.7"/>
<line x1="1357.0" y1="649.0" x2="1397.5" y2="654.5" stroke="#3a3a3a" stroke-width="0.7"/>
<line x1="1369.0" y1="640.3" x2="1407.9" y2="645.8" stroke="#3a3a3a" stroke-width="0.7"/>
<line x1="1381.0" y1="631.7" x2="1418.3" y2="637.0" stroke="#3a3a3a" stroke-width="0.7"/>
<line x1="1393.0" y1="623.0" x2="1428.8" y2="628.2" stroke="#3a3a3a" stroke-width="0.7"/>
<line x1="1405.0" y1="614.3" x2="1439.2" y2="619.5" stroke="#3a3a3a" stroke-width="0.7"/>
<line x1="1417.0" y1="605.7" x2="1449.6" y2="610.8" stroke="#3a3a3a" stroke-width="0.7"/>
<line x1="1312.5" y1="704.3" x2="1460.5" y2="593.9" stroke="#3a3a3a" stroke-width="0.7"/>
<polygon points="1332.0,667.0 1363.0,672.0 1365.0,683.0 1334.0,678.0" fill="#e4e4e4" stroke="#3c3c3c" stroke-width="0.5" stroke-linejoin="round"/>
<polygon points="1430.0,580.0 1448.0,582.0 1450.0,594.0 1432.0,592.0" fill="#cfcfcf" stroke="#3c3c3c" stroke-width="0.5" stroke-linejoin="round"/>
<polygon points="1235.0,836.0 1360.0,857.5 1360.0,882.0 1237.0,862.0" fill="#8c8c8c" stroke="#3c3c3c" stroke-width="0.6" stroke-linejoin="round"/>
<polygon points="1237.0,862.0 1360.0,882.0 1372.0,885.0 1372.0,899.0 1239.0,877.0" fill="#b2b2b2" stroke="#3c3c3c" stroke-width="0.5" stroke-linejoin="round"/>
<polygon points="1360.0,882.0 1372.0,885.0 1380.0,880.0 1380.0,893.0 1372.0,899.0" fill="#a8a8a8" stroke="#3c3c3c" stroke-width="0.5" stroke-linejoin="round"/>
<polygon points="1266.0,738.0 1283.6,724.0 1282.0,709.0 1297.7,751.0 1302.5,827.0 1294.6,831.5" fill="#7c7c7c" stroke="#3c3c3c" stroke-width="0.5" stroke-linejoin="round"/>
<polygon points="1282.0,747.0 1297.0,748.0 1298.0,753.0 1283.0,752.0" fill="#8e8e8e" stroke="#3c3c3c" stroke-width="0.5" stroke-linejoin="round"/>
<polygon points="1282.0,765.0 1297.0,766.0 1298.0,771.0 1283.0,770.0" fill="#8e8e8e" stroke="#3c3c3c" stroke-width="0.5" stroke-linejoin="round"/>
<polygon points="1282.0,784.0 1297.0,785.0 1298.0,790.0 1283.0,789.0" fill="#8e8e8e" stroke="#3c3c3c" stroke-width="0.5" stroke-linejoin="round"/>
<line x1="1293.0" y1="735.0" x2="1297.0" y2="830.0" stroke="#333" stroke-width="1.4"/>
<polygon points="1266.0,738.3 1283.3,724.0 1295.0,832.5 1275.0,841.2" fill="#a8a8a8" stroke="#3c3c3c" stroke-width="0.6" stroke-linejoin="round"/>
<line x1="1270.0" y1="760.0" x2="1287.0" y2="748.0" stroke="#555" stroke-width="0.5"/>
<line x1="1272.0" y1="780.0" x2="1289.0" y2="768.0" stroke="#555" stroke-width="0.5"/>
<line x1="1273.0" y1="800.0" x2="1291.0" y2="788.0" stroke="#555" stroke-width="0.5"/>
<polygon points="1223.0,736.0 1266.0,742.0 1275.0,841.2 1233.8,836.2" fill="#a4a4a4" stroke="#3c3c3c" stroke-width="0.6" stroke-linejoin="round"/>
<line x1="1225.0" y1="758.0" x2="1241.0" y2="760.0" stroke="#666" stroke-width="0.5"/>
<line x1="1225.0" y1="777.0" x2="1241.0" y2="779.0" stroke="#666" stroke-width="0.5"/>
<line x1="1225.0" y1="796.0" x2="1241.0" y2="798.0" stroke="#666" stroke-width="0.5"/>
<line x1="1225.0" y1="815.0" x2="1241.0" y2="817.0" stroke="#666" stroke-width="0.5"/>
<polygon points="1241.0,744.0 1266.0,745.6 1272.0,838.0 1250.0,836.0" fill="#e2e9ee" stroke="#3c3c3c" stroke-width="0.5" stroke-linejoin="round"/>
<line x1="1242.8" y1="762.4" x2="1267.2" y2="764.1" stroke="#333" stroke-width="1.0"/>
<line x1="1244.6" y1="780.8" x2="1268.4" y2="782.6" stroke="#333" stroke-width="1.0"/>
<line x1="1246.4" y1="799.2" x2="1269.6" y2="801.0" stroke="#333" stroke-width="1.0"/>
<line x1="1248.2" y1="817.6" x2="1270.8" y2="819.5" stroke="#333" stroke-width="1.0"/>
<line x1="1253.0" y1="744.0" x2="1261.0" y2="837.0" stroke="#333" stroke-width="1.0"/>
<polygon points="1256.0,820.0 1270.0,822.0 1271.0,837.0 1257.0,836.0" fill="#1e1e1e"/>
<polygon points="1223.0,732.7 1236.0,721.5 1282.5,724.0 1266.0,738.3" fill="#e8e8e8" stroke="#3c3c3c" stroke-width="0.6" stroke-linejoin="round"/>
<polygon points="1223.0,732.7 1266.0,738.3 1266.0,744.0 1223.0,738.7" fill="#9a9a9a" stroke="#3c3c3c" stroke-width="0.5" stroke-linejoin="round"/>
<polygon points="1169.0,742.0 1196.4,715.5 1222.0,700.0 1236.0,708.6 1218.0,732.0 1210.0,744.8 1223.5,748.0" fill="#bdbdbd" stroke="#3c3c3c" stroke-width="0.6" stroke-linejoin="round"/>
<line x1="1196.4" y1="715.5" x2="1218.0" y2="732.0" stroke="#555" stroke-width="0.5"/>
<polygon points="1134.5,773.0 1169.0,742.0 1223.5,748.0 1227.4,784.8" fill="#cbcbcb" stroke="#3c3c3c" stroke-width="0.6" stroke-linejoin="round"/>
<polygon points="1134.5,773.0 1227.4,784.8 1227.8,788.5 1135.0,777.0" fill="#9a9a9a" stroke="#3c3c3c" stroke-width="0.5" stroke-linejoin="round"/>
<polygon points="1135.0,777.0 1227.8,788.5 1232.5,835.0 1142.5,822.5" fill="#5c584c" stroke="#3c3c3c" stroke-width="0.6" stroke-linejoin="round"/>
<polygon points="1148.0,785.0 1154.0,785.7 1154.0,794.0 1148.0,793.3" fill="#b8b8b8" stroke="#3c3c3c" stroke-width="0.5" stroke-linejoin="round"/>
<polygon points="1169.0,787.4 1175.0,788.1 1175.0,796.4 1169.0,795.7" fill="#b8b8b8" stroke="#3c3c3c" stroke-width="0.5" stroke-linejoin="round"/>
<polygon points="1182.7,789.0 1188.7,789.7 1188.7,798.0 1182.7,797.3" fill="#b8b8b8" stroke="#3c3c3c" stroke-width="0.5" stroke-linejoin="round"/>
<polygon points="1194.0,790.3 1200.0,791.0 1200.0,799.3 1194.0,798.6" fill="#b8b8b8" stroke="#3c3c3c" stroke-width="0.5" stroke-linejoin="round"/>
<polygon points="1208.5,792.0 1214.5,792.7 1214.5,801.0 1208.5,800.3" fill="#b8b8b8" stroke="#3c3c3c" stroke-width="0.5" stroke-linejoin="round"/>
<polygon points="1219.0,793.2 1225.0,793.9 1225.0,802.2 1219.0,801.5" fill="#b8b8b8" stroke="#3c3c3c" stroke-width="0.5" stroke-linejoin="round"/>
<polygon points="1144.0,804.0 1157.0,805.0 1157.0,816.0 1144.0,815.0" fill="#a4a4a4" stroke="#3c3c3c" stroke-width="0.5" stroke-linejoin="round"/>
<polygon points="1170.0,807.0 1180.0,808.0 1180.0,819.0 1170.0,818.0" fill="#a4a4a4" stroke="#3c3c3c" stroke-width="0.5" stroke-linejoin="round"/>
<polygon points="1186.0,808.9 1192.0,809.9 1192.0,820.9 1186.0,819.9" fill="#a4a4a4" stroke="#3c3c3c" stroke-width="0.5" stroke-linejoin="round"/>
<polygon points="1198.0,810.2 1204.0,811.2 1204.0,822.2 1198.0,821.2" fill="#a4a4a4" stroke="#3c3c3c" stroke-width="0.5" stroke-linejoin="round"/>
<polygon points="1212.0,811.9 1218.0,812.9 1218.0,823.9 1212.0,822.9" fill="#a4a4a4" stroke="#3c3c3c" stroke-width="0.5" stroke-linejoin="round"/>
<polygon points="1222.0,813.0 1228.0,814.0 1228.0,825.0 1222.0,824.0" fill="#a4a4a4" stroke="#3c3c3c" stroke-width="0.5" stroke-linejoin="round"/>
<polygon points="1142.5,822.5 1232.5,835.0 1235.0,851.0 1145.0,839.0" fill="#9c9c9c" stroke="#3c3c3c" stroke-width="0.6" stroke-linejoin="round"/>
<polygon points="1145.0,839.0 1235.0,851.0 1239.0,877.0 1147.0,864.0" fill="#b8b8b8" stroke="#3c3c3c" stroke-width="0.6" stroke-linejoin="round"/>
</svg><div id="status" class="a"><span style="left:0;color:#6d6d6d;font-size:10.2px;top:6px">Free mode</span><span style="left:75px;color:#6d6d6d;font-size:10.6px">Buy now</span><span style="left:2441px;color:#000">My view: 0&nbsp; Selected: 0</span></div>
</body></html>
